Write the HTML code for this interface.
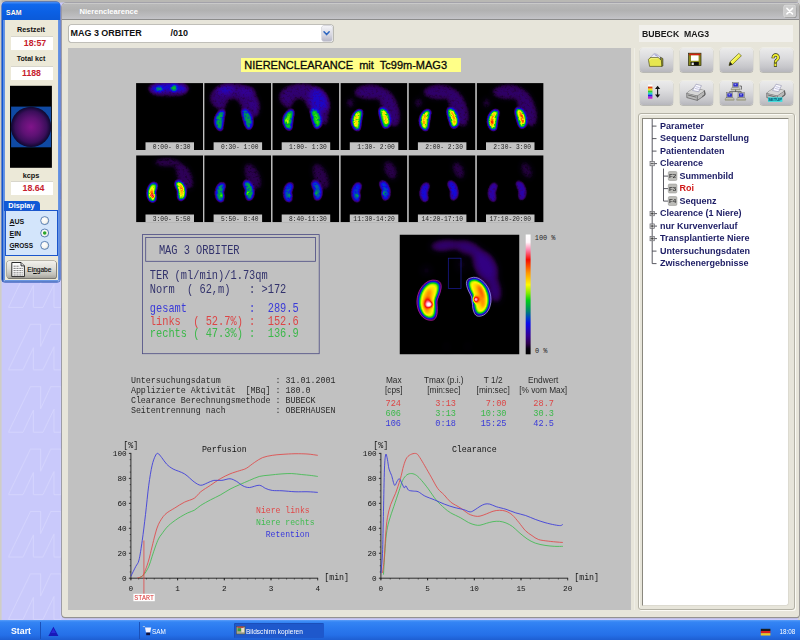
<!DOCTYPE html>
<html><head><meta charset="utf-8"><title>Nierenclearence</title>
<style>

html,body{margin:0;padding:0;}
body{width:800px;height:640px;overflow:hidden;position:relative;background:#c9c9fb;font-family:"Liberation Sans",sans-serif;}
div,span{position:absolute;box-sizing:border-box;white-space:pre;}
.b{font-weight:bold;}
svg{position:absolute;left:0;top:0;overflow:visible;}
.lbl{font-weight:bold;color:#111;text-align:center;left:5px;width:52px;}
.fld{background:#fff;left:11px;width:42px;height:14px;border-top:1px solid #d8d6cc;color:#c6202c;font-weight:bold;text-align:center;}
.tb{background:linear-gradient(#ebebeb 0%,#dcdcde 40%,#c6c6ca 80%,#b6b6bc 100%);border-radius:3px;width:33px;height:24px;box-shadow:0 0.5px 0.6px 0.3px #a8a8a4, 0 0 0.5px 0.6px #f6f5ee;}
.ti{color:#1c1c64;font-weight:bold;font-size:9px;line-height:12.5px;height:12.5px;left:660px;letter-spacing:0px;}
.mono{font-family:"Liberation Mono",monospace;}

</style></head>
<body>

<svg width="800" height="640" viewBox="0 0 800 640">
<defs><pattern id="mm" x="8" y="11.8" width="80" height="62.4" patternUnits="userSpaceOnUse">
<path d="M0.4 46 L22.5 0.4 H32.6 V22.6 L42.8 0.4 H53 V46 H46 V23 L35 46 H25.4 V24 L15 46 Z" fill="none" stroke="#d9d9fe" stroke-width="0.7" stroke-linejoin="round"/>
</pattern></defs>
<rect x="0" y="0" width="800" height="640" fill="#c9c9fb"/>
<rect x="0" y="0" width="62" height="640" fill="url(#mm)"/>
<rect x="0" y="0" width="800" height="2.5" fill="#b9b8b4"/>
<rect x="0" y="0" width="1.6" height="640" fill="#cfcdc6"/>
<rect x="798" y="0" width="2" height="620" fill="#d2d2d2"/>
</svg>


<div id="sam" style="left:2px;top:2px;width:58px;height:280px;background:linear-gradient(#1259d6 0%,#1155cf 90%,#0d3fa4 100%);border-radius:4px 4px 3px 3px;box-shadow:0 0 0 0.5px #0b3fa8;">
 <div style="left:3px;top:18px;width:52.5px;height:259.5px;background:#ece9d8;box-shadow:0 0 0 0.6px #2460d0,0 0 0 1.4px #d4e2fc;"></div>
 <div style="left:0;top:0;width:58px;height:17.6px;border-radius:4px 4px 0 0;background:linear-gradient(#4a90f6 0%,#1068ec 14%,#0b60e4 55%,#0b5ad8 100%);"></div>
 <div class="b" style="left:4px;top:5.8px;color:#fff;font-size:7px;line-height:9px;text-shadow:0.4px 0.4px 0 #0a2a80;">SAM</div>
</div>
<div class="lbl" style="top:25px;font-size:7.3px;line-height:9px;">Restzeit</div>
<div class="fld" style="top:36px;font-size:8.8px;line-height:13px;padding-left:6px;">18:57</div>
<div class="lbl" style="top:55px;font-size:7.1px;line-height:9px;">Total kct</div>
<div class="fld" style="top:66px;font-size:8.7px;line-height:13px;padding-right:1px;">1188</div>
<svg width="800" height="640" viewBox="0 0 800 640">
 <defs><radialGradient id="sph" cx="0.5" cy="0.5" r="0.5"><stop offset="0" stop-color="#80148a"/><stop offset="0.45" stop-color="#5e1274"/><stop offset="0.78" stop-color="#3a0e5a"/><stop offset="0.93" stop-color="#1a0a3c"/><stop offset="1" stop-color="#0e0a30"/></radialGradient></defs>
 <rect x="10" y="85.8" width="41.9" height="82" fill="#000"/>
 <rect x="11.1" y="106.6" width="40" height="40.7" fill="#0f4aa4"/>
 <circle cx="31" cy="126.9" r="20.2" fill="url(#sph)"/>
</svg>
<div class="lbl" style="top:170.5px;font-size:7.35px;line-height:9px;">kcps</div>
<div class="fld" style="top:181px;font-size:8.8px;line-height:13px;padding-left:3px;">18.64</div>
<div style="left:4px;top:201px;width:36px;height:10px;background:#1259d6;border-radius:0 4px 0 0;"></div>
<div class="b" style="left:8.3px;top:201px;color:#fff;font-size:7.4px;line-height:9.5px;">Display</div>
<div style="left:4.6px;top:210px;width:53.2px;height:46.2px;background:#1a56cc;"></div>
<div style="left:5.5px;top:211px;width:51.6px;height:44.4px;background:#d3e5fb;"></div>
<div class="b" style="left:9.5px;top:216.5px;font-size:7px;line-height:9px;color:#111;"><u>A</u>US</div>
<div class="b" style="left:9.5px;top:228.5px;font-size:7px;line-height:9px;color:#111;"><u>E</u>IN</div>
<div class="b" style="left:9.5px;top:241px;font-size:6.5px;line-height:9px;color:#111;"><u>G</u>ROSS</div>
<svg width="800" height="640" viewBox="0 0 800 640">
 <defs><radialGradient id="rad" cx="0.4" cy="0.4" r="0.6"><stop offset="0" stop-color="#fff"/><stop offset="0.7" stop-color="#f4f4f0"/><stop offset="1" stop-color="#d8d8d0"/></radialGradient></defs>
 <circle cx="44.7" cy="220.6" r="4" fill="url(#rad)" stroke="#3c6aa8" stroke-width="0.8"/>
 <circle cx="44.7" cy="233" r="4" fill="url(#rad)" stroke="#3c6aa8" stroke-width="0.8"/>
 <circle cx="44.7" cy="233" r="1.8" fill="#2aa52a"/>
 <circle cx="44.7" cy="245.4" r="4" fill="url(#rad)" stroke="#3c6aa8" stroke-width="0.8"/>
</svg>
<div style="left:6.8px;top:261.3px;width:49.4px;height:16.6px;border-radius:2.5px;background:linear-gradient(#f2f1ec 0%,#deddd6 45%,#c2c0b8 80%,#a6a49c 100%);box-shadow:0 0 0 0.6px #86847c, 0.5px 0.8px 0.5px 0.3px #6e6c66;"></div>
<svg width="800" height="640" viewBox="0 0 800 640">
<path d="M11.8 262.5 H21 L24.4 265.9 V276.6 H11.8 Z" fill="#fbfbfb" stroke="#161616" stroke-width="0.9" stroke-linejoin="round"/>
<path d="M21 262.5 V265.9 H24.4" fill="#d8d8d8" stroke="#161616" stroke-width="0.8"/>
<g stroke="#3a3a3a" stroke-width="0.65"><path d="M13.5 266.2 H19.5 M13.5 268.4 H23 M13.5 270.6 H23 M13.5 272.8 H23 M13.5 275 H23" stroke-dasharray="2.2 0.7"/></g>
</svg>
<div style="left:27.3px;top:265.3px;font-size:6.55px;line-height:9px;color:#0c0c0c;-webkit-text-stroke:0.15px #0c0c0c;">Ei<u>n</u>gabe</div>


<div id="main" style="left:61.5px;top:2.5px;width:737px;height:614px;background:#e7e5da;border-radius:4px 3px 2px 3px;box-shadow:0 0 0 0.6px #86847e, 0 1px 0.5px 0.3px #a2a0a4;">
 <div style="left:0;top:0;width:737px;height:17px;border-radius:4px 3px 0 0;background:linear-gradient(#d2d2d2 0%,#b8b8b8 9%,#b1b1b1 45%,#bcbcbe 80%,#c4c4c8 100%);border-bottom:1px solid #8c8c8c;"></div>
</div>
<div class="b" style="left:79.5px;top:7.3px;font-size:7.57px;line-height:9px;color:#fff;">Nierenclearence</div>
<svg width="800" height="640" viewBox="0 0 800 640">
 <rect x="784.4" y="5.9" width="12.2" height="12" rx="2.2" fill="#8a8a8a"/>
 <rect x="783.6" y="5.1" width="12.2" height="12" rx="2.2" fill="#cdcdcd" stroke="#e6e6e6" stroke-width="0.5"/>
 <path d="M786.9 8.4 L792.5 13.9 M792.5 8.4 L786.9 13.9" stroke="#fff" stroke-width="1.5" stroke-linecap="round"/>
</svg>
<div style="left:68.5px;top:25px;width:264px;height:16.5px;background:#fff;border-radius:2px;box-shadow:0 0 0 0.6px #9a9a98;"></div>
<div class="b" style="left:70.5px;top:28.2px;font-size:8.96px;line-height:11px;color:#111;">MAG 3 ORBITER</div>
<div class="b" style="left:170.6px;top:28.2px;font-size:9px;line-height:11px;color:#111;">/010</div>
<div style="left:321.5px;top:26px;width:10px;height:14.5px;border-radius:1.5px;background:linear-gradient(#f4f4f8,#d6d6e0 60%,#b8b8c8);box-shadow:0 0 0 0.4px #b0b0bc;"></div>
<svg width="800" height="640" viewBox="0 0 800 640"><path d="M324 31.7 L326.6 34.6 L329.2 31.7" fill="none" stroke="#2d66c0" stroke-width="1.5" stroke-linecap="round" stroke-linejoin="round"/></svg>

<div style="left:68px;top:47.5px;width:562.5px;height:562px;background:#c1c1c1;"></div>
<div style="left:241px;top:58px;width:220px;height:14px;background:#ffff88;"></div>
<div style="left:244.3px;top:59.2px;font-size:11px;line-height:12px;color:#0a0a0a;-webkit-text-stroke:0.3px #0a0a0a;">NIERENCLEARANCE  mit  Tc99m-MAG3</div>
<svg width="800" height="640" viewBox="0 0 800 640"><defs>
<filter id="cmf" filterUnits="userSpaceOnUse" x="135" y="82" width="411" height="142" color-interpolation-filters="sRGB"><feTurbulence type="fractalNoise" baseFrequency="0.42" numOctaves="2" seed="7" result="n"/><feColorMatrix in="n" type="matrix" values="0.9 0 0 0 0.55  0.9 0 0 0 0.55  0.9 0 0 0 0.55  0 0 0 0 1" result="ng"/><feComposite in="SourceGraphic" in2="ng" operator="arithmetic" k1="1" k2="0" k3="0" k4="0" result="m"/><feComponentTransfer in="m"><feFuncR type="table" tableValues="0 0.007 0.014 0.068 0.138 0.177 0.187 0.197 0.196 0.167 0.137 0.107 0.077 0.047 0.028 0.009 0 0 0 0 0 0 0 0.085 0.255 0.425 0.58 0.72 0.86 1 1 1 1 1 1 0.994 0.987 0.981 0.974 0.968 0.969 0.978 0.987 0.996 1 1 1 1 1 1 1"/><feFuncG type="table" tableValues="0 0 0 0 0 0 0 0 0.002 0.011 0.02 0.029 0.038 0.047 0.141 0.235 0.329 0.424 0.518 0.584 0.65 0.716 0.783 0.834 0.871 0.907 0.933 0.949 0.965 0.98 0.902 0.824 0.745 0.667 0.588 0.488 0.389 0.289 0.189 0.089 0.098 0.216 0.333 0.451 0.58 0.72 0.86 0.967 0.978 0.989 1"/><feFuncB type="table" tableValues="0 0.017 0.035 0.125 0.241 0.34 0.423 0.506 0.586 0.654 0.722 0.79 0.858 0.925 0.853 0.781 0.682 0.557 0.431 0.353 0.275 0.196 0.118 0.065 0.039 0.013 0 0 0 0 0 0 0 0 0 0 0 0 0 0 0.083 0.25 0.417 0.583 0.715 0.811 0.908 0.982 0.988 0.994 1"/></feComponentTransfer></filter>
<filter id="cmf2" filterUnits="userSpaceOnUse" x="399" y="234" width="121" height="121" color-interpolation-filters="sRGB"><feComponentTransfer><feFuncR type="table" tableValues="0 0.007 0.014 0.068 0.138 0.177 0.187 0.197 0.196 0.167 0.137 0.107 0.077 0.047 0.028 0.009 0 0 0 0 0 0 0 0.085 0.255 0.425 0.58 0.72 0.86 1 1 1 1 1 1 0.994 0.987 0.981 0.974 0.968 0.969 0.978 0.987 0.996 1 1 1 1 1 1 1"/><feFuncG type="table" tableValues="0 0 0 0 0 0 0 0 0.002 0.011 0.02 0.029 0.038 0.047 0.141 0.235 0.329 0.424 0.518 0.584 0.65 0.716 0.783 0.834 0.871 0.907 0.933 0.949 0.965 0.98 0.902 0.824 0.745 0.667 0.588 0.488 0.389 0.289 0.189 0.089 0.098 0.216 0.333 0.451 0.58 0.72 0.86 0.967 0.978 0.989 1"/><feFuncB type="table" tableValues="0 0.017 0.035 0.125 0.241 0.34 0.423 0.506 0.586 0.654 0.722 0.79 0.858 0.925 0.853 0.781 0.682 0.557 0.431 0.353 0.275 0.196 0.118 0.065 0.039 0.013 0 0 0 0 0 0 0 0 0 0 0 0 0 0 0.083 0.25 0.417 0.583 0.715 0.811 0.908 0.982 0.988 0.994 1"/></feComponentTransfer></filter>
<filter id="bk" x="-40%" y="-40%" width="180%" height="180%" color-interpolation-filters="sRGB"><feGaussianBlur stdDeviation="1.25"/></filter>
<filter id="bz" x="-40%" y="-40%" width="180%" height="180%" color-interpolation-filters="sRGB"><feGaussianBlur stdDeviation="2.4"/></filter>
<filter id="bk2" x="-40%" y="-40%" width="180%" height="180%" color-interpolation-filters="sRGB"><feGaussianBlur stdDeviation="1.5"/></filter>
<filter id="bz2" x="-40%" y="-40%" width="180%" height="180%" color-interpolation-filters="sRGB"><feGaussianBlur stdDeviation="3.6"/></filter>
<clipPath id="c67"><rect x="0" y="0" width="67" height="67"/></clipPath>
<clipPath id="c120"><rect x="0" y="0" width="120" height="120"/></clipPath>
<linearGradient id="cbar" x1="0" y1="0" x2="0" y2="1"><stop offset="0.000" stop-color="#ffffff"/><stop offset="0.065" stop-color="#fff6fa"/><stop offset="0.130" stop-color="#ff82aa"/><stop offset="0.210" stop-color="#f60a00"/><stop offset="0.320" stop-color="#ff9600"/><stop offset="0.420" stop-color="#fffa00"/><stop offset="0.490" stop-color="#82ec00"/><stop offset="0.550" stop-color="#00d014"/><stop offset="0.640" stop-color="#00846e"/><stop offset="0.690" stop-color="#0048be"/><stop offset="0.740" stop-color="#0c0cec"/><stop offset="0.845" stop-color="#340091"/><stop offset="0.910" stop-color="#2c004c"/><stop offset="0.955" stop-color="#04000a"/><stop offset="1.000" stop-color="#000000"/></linearGradient>
</defs><g filter="url(#cmf)"><g transform="translate(136.1 83.1)" clip-path="url(#c67)"><rect x="0" y="0" width="67" height="67" fill="#000"/><g filter="url(#bz)"><ellipse cx="32.5" cy="5.5" rx="20" ry="6" fill="#404040"/><ellipse cx="32.5" cy="10.5" rx="18" ry="3" fill="#212121"/></g><g filter="url(#bk)"><ellipse cx="23" cy="6" rx="3.8" ry="2.6" fill="#5e5e5e"/><ellipse cx="37.8" cy="5" rx="3" ry="3.2" fill="#707070"/></g></g><g transform="translate(204.2 83.1)" clip-path="url(#c67)"><rect x="0" y="0" width="67" height="67" fill="#000"/><g filter="url(#bz)"><ellipse cx="29" cy="15" rx="24" ry="15" fill="#202020"/><ellipse cx="21" cy="6.5" rx="9" ry="4.5" fill="#343434"/><ellipse cx="42" cy="8" rx="9" ry="5" fill="#292929"/><ellipse cx="50" cy="24" rx="6" ry="11" fill="#242424"/><ellipse cx="29" cy="30" rx="8.5" ry="14" fill="#000000"/></g><g filter="url(#bk)"><path d="M19.6 37.7 19.2 40.6 18.9 43.2 18.6 45.5 18.0 47.0 17.0 47.7 15.0 47.4 13.4 46.3 12.0 44.5 10.8 42.1 10.2 39.3 10.2 36.3 11.0 33.5 12.4 31.0 14.1 29.0 16.0 27.6 17.9 27.0 19.8 27.3 20.6 28.3 20.8 29.9 20.5 32.1 20.0 34.8Z" fill="#4c4c4c"/><path d="M18.4 37.5 18.1 40.1 17.8 42.5 17.6 44.5 17.1 45.8 16.4 46.5 14.9 46.3 13.7 45.4 12.6 43.8 11.8 41.6 11.3 39.1 11.4 36.5 12.0 34.0 13.2 31.7 14.6 29.9 16.0 28.6 17.4 28.1 18.9 28.3 19.5 29.1 19.5 30.6 19.2 32.5 18.8 34.9Z" fill="#5b5b5b"/><path d="M17.2 37.3 17.0 39.6 16.8 41.7 16.6 43.5 16.3 44.7 15.8 45.3 14.8 45.2 14.0 44.4 13.3 43.0 12.7 41.2 12.5 39.0 12.6 36.7 13.1 34.4 13.9 32.4 15.0 30.8 16.1 29.7 17.1 29.1 18.1 29.3 18.4 30.0 18.3 31.2 18.0 33.0 17.6 35.1Z" fill="#696969"/><path d="M48.1 34.5 48.7 37.4 48.7 40.3 48.3 42.8 47.4 44.7 46.1 46.0 44.2 46.5 42.9 46.0 41.8 44.6 40.8 42.6 39.9 40.0 39.1 37.1 38.3 34.2 37.7 31.5 37.4 29.2 37.6 27.5 38.4 26.4 40.3 25.8 42.1 26.2 43.8 27.4 45.6 29.3 47.0 31.7Z" fill="#4c4c4c"/><path d="M47.0 34.8 47.5 37.5 47.6 40.0 47.4 42.2 46.8 43.9 45.8 44.9 44.4 45.3 43.4 44.8 42.5 43.6 41.7 41.7 41.0 39.3 40.2 36.8 39.5 34.2 38.9 31.8 38.6 29.8 38.6 28.2 39.2 27.3 40.7 26.9 42.0 27.3 43.4 28.4 44.8 30.1 46.1 32.3Z" fill="#595959"/><path d="M45.9 35.2 46.4 37.5 46.6 39.7 46.5 41.6 46.1 43.0 45.5 43.9 44.6 44.1 43.9 43.6 43.3 42.5 42.6 40.8 42.0 38.7 41.3 36.4 40.7 34.2 40.1 32.1 39.8 30.3 39.7 29.0 40.0 28.2 41.0 27.9 41.9 28.4 43.0 29.4 44.1 31.0 45.1 32.9Z" fill="#666666"/></g></g><g transform="translate(272.29999999999995 83.1)" clip-path="url(#c67)"><rect x="0" y="0" width="67" height="67" fill="#000"/><g filter="url(#bz)"><ellipse cx="29" cy="14" rx="23" ry="14" fill="#202020"/><ellipse cx="47.5" cy="19" rx="9" ry="15" fill="#373737" transform="rotate(-18 47.5 19)"/><ellipse cx="52" cy="34" rx="4.5" ry="9" fill="#212121"/><ellipse cx="27" cy="30" rx="8.5" ry="14" fill="#000000"/></g><g filter="url(#bk)"><path d="M20.5 37.2 20.1 40.1 19.8 42.8 19.5 45.0 18.9 46.5 17.8 47.2 15.8 46.9 14.1 45.8 12.6 44.0 11.4 41.6 10.7 38.8 10.7 35.8 11.5 33.0 12.9 30.4 14.8 28.4 16.7 27.1 18.6 26.5 20.7 26.8 21.5 27.8 21.7 29.4 21.4 31.6 20.9 34.3Z" fill="#595959"/><path d="M19.0 37.0 18.7 39.5 18.5 41.8 18.2 43.7 17.8 45.1 17.0 45.7 15.6 45.5 14.4 44.6 13.4 43.1 12.5 41.0 12.1 38.6 12.2 36.0 12.8 33.5 13.9 31.3 15.3 29.6 16.7 28.4 18.1 27.8 19.5 28.1 20.1 28.9 20.1 30.3 19.8 32.2 19.4 34.5Z" fill="#6c6c6c"/><path d="M17.5 36.8 17.3 38.9 17.1 40.9 17.0 42.5 16.8 43.7 16.4 44.2 15.5 44.1 14.9 43.4 14.2 42.1 13.8 40.4 13.5 38.4 13.7 36.2 14.1 34.1 14.9 32.2 15.8 30.7 16.8 29.7 17.6 29.2 18.5 29.3 18.7 29.9 18.6 31.1 18.3 32.7 17.9 34.7Z" fill="#808080"/><ellipse cx="14.0" cy="38" rx="1.0" ry="1.6" fill="#bdbdbd"/><path d="M48.8 33.8 49.3 36.7 49.3 39.5 48.7 41.9 47.8 43.8 46.5 45.0 44.5 45.6 43.2 45.1 42.1 43.7 41.2 41.6 40.4 39.1 39.6 36.2 38.8 33.4 38.3 30.8 38.1 28.5 38.3 26.8 39.2 25.7 41.1 25.2 42.9 25.6 44.7 26.7 46.4 28.6 47.8 31.0Z" fill="#595959"/><path d="M47.4 34.1 47.9 36.6 48.0 39.0 47.7 41.1 47.1 42.7 46.2 43.7 44.8 44.1 43.9 43.6 43.1 42.4 42.3 40.6 41.6 38.3 41.0 35.9 40.3 33.4 39.8 31.1 39.5 29.2 39.6 27.7 40.2 26.8 41.5 26.5 42.8 26.9 44.1 27.9 45.5 29.6 46.6 31.7Z" fill="#6b6b6b"/><path d="M46.1 34.5 46.5 36.6 46.7 38.6 46.6 40.4 46.3 41.7 45.8 42.4 45.0 42.6 44.5 42.1 43.9 41.1 43.4 39.5 42.9 37.6 42.3 35.5 41.8 33.4 41.3 31.5 40.9 29.9 40.9 28.7 41.1 28.0 41.9 27.8 42.7 28.2 43.6 29.2 44.5 30.6 45.4 32.4Z" fill="#7d7d7d"/></g></g><g transform="translate(340.4 83.1)" clip-path="url(#c67)"><rect x="0" y="0" width="67" height="67" fill="#000"/><g filter="url(#bz)"><ellipse cx="30" cy="9" rx="17" ry="8" fill="#1f1f1f"/><ellipse cx="49.5" cy="25" rx="9" ry="20" fill="#202020" transform="rotate(-18 49.5 25)"/><ellipse cx="10" cy="20" rx="5" ry="6" fill="#161616"/></g><g filter="url(#bk)"><path d="M20.9 37.4 20.5 40.3 20.1 43.1 19.7 45.3 19.0 46.8 17.8 47.5 15.7 47.2 14.1 46.1 12.6 44.2 11.5 41.7 11.0 38.8 11.1 35.8 11.9 32.9 13.3 30.4 15.1 28.4 17.1 27.0 19.0 26.5 21.1 26.8 22.0 27.8 22.2 29.5 21.9 31.7 21.4 34.4Z" fill="#666666"/><path d="M19.5 37.2 19.1 39.7 18.8 42.1 18.5 44.0 18.0 45.4 17.1 46.0 15.7 45.8 14.5 44.9 13.5 43.3 12.7 41.1 12.3 38.7 12.5 36.0 13.2 33.5 14.3 31.3 15.7 29.5 17.1 28.3 18.5 27.8 20.0 28.0 20.6 28.8 20.7 30.3 20.4 32.2 19.9 34.6Z" fill="#7c7c7c"/><path d="M18.1 36.9 17.8 39.1 17.5 41.1 17.3 42.8 17.0 44.0 16.5 44.5 15.7 44.4 15.0 43.7 14.4 42.3 13.9 40.6 13.8 38.5 13.9 36.3 14.4 34.1 15.3 32.2 16.2 30.6 17.2 29.6 18.1 29.1 19.0 29.2 19.3 29.9 19.2 31.1 18.9 32.8 18.5 34.8Z" fill="#919191"/><path d="M49.5 33.3 50.0 36.2 50.0 39.0 49.4 41.5 48.4 43.4 47.1 44.6 45.1 45.2 43.7 44.7 42.6 43.3 41.7 41.2 40.9 38.7 40.1 35.9 39.3 33.0 38.8 30.4 38.6 28.1 38.8 26.4 39.7 25.3 41.7 24.8 43.5 25.1 45.3 26.3 47.1 28.2 48.5 30.6Z" fill="#666666"/><path d="M48.2 33.7 48.6 36.2 48.7 38.6 48.4 40.7 47.7 42.3 46.8 43.3 45.4 43.7 44.4 43.2 43.6 42.0 42.8 40.2 42.1 38.0 41.4 35.5 40.8 33.0 40.3 30.7 40.0 28.8 40.1 27.3 40.7 26.4 42.1 26.0 43.4 26.4 44.8 27.5 46.1 29.2 47.3 31.3Z" fill="#7c7c7c"/><path d="M46.8 34.1 47.2 36.2 47.4 38.2 47.3 40.0 47.0 41.3 46.4 42.1 45.6 42.3 45.0 41.8 44.4 40.7 43.9 39.1 43.4 37.2 42.8 35.1 42.3 33.0 41.8 31.1 41.4 29.5 41.4 28.3 41.6 27.6 42.5 27.3 43.3 27.7 44.3 28.7 45.2 30.2 46.1 32.0Z" fill="#919191"/><path d="M16.6 30.5 Q14.2 36.5 15.4 42.5" stroke="#cccccc" stroke-width="1.1" fill="none" stroke-linecap="round"/><path d="M43.4 28.6 Q46.2 33.5 46.6 40" stroke="#cccccc" stroke-width="1.1" fill="none" stroke-linecap="round"/></g></g><g transform="translate(408.5 83.1)" clip-path="url(#c67)"><rect x="0" y="0" width="67" height="67" fill="#000"/><g filter="url(#bz)"><ellipse cx="31" cy="9" rx="17" ry="8" fill="#1e1e1e"/><ellipse cx="50.0" cy="25" rx="9" ry="20" fill="#1f1f1f" transform="rotate(-18 50.0 25)"/><ellipse cx="10" cy="20" rx="5" ry="6" fill="#151515"/></g><g filter="url(#bk)"><path d="M20.9 37.4 20.5 40.3 20.1 43.1 19.7 45.3 19.0 46.8 17.8 47.5 15.7 47.2 14.1 46.1 12.6 44.2 11.5 41.7 11.0 38.8 11.1 35.8 11.9 32.9 13.3 30.4 15.1 28.4 17.1 27.0 19.0 26.5 21.1 26.8 22.0 27.8 22.2 29.5 21.9 31.7 21.4 34.4Z" fill="#696969"/><path d="M19.5 37.2 19.1 39.7 18.8 42.1 18.5 44.0 18.0 45.4 17.1 46.0 15.7 45.8 14.5 44.9 13.5 43.3 12.7 41.1 12.3 38.7 12.5 36.0 13.2 33.5 14.3 31.3 15.7 29.5 17.1 28.3 18.5 27.8 20.0 28.0 20.6 28.8 20.7 30.3 20.4 32.2 19.9 34.6Z" fill="#818181"/><path d="M18.1 36.9 17.8 39.1 17.5 41.1 17.3 42.8 17.0 44.0 16.5 44.5 15.7 44.4 15.0 43.7 14.4 42.3 13.9 40.6 13.8 38.5 13.9 36.3 14.4 34.1 15.3 32.2 16.2 30.6 17.2 29.6 18.1 29.1 19.0 29.2 19.3 29.9 19.2 31.1 18.9 32.8 18.5 34.8Z" fill="#999999"/><path d="M49.5 33.3 50.0 36.2 50.0 39.0 49.4 41.5 48.4 43.4 47.1 44.6 45.1 45.2 43.7 44.7 42.6 43.3 41.7 41.2 40.9 38.7 40.1 35.9 39.3 33.0 38.8 30.4 38.6 28.1 38.8 26.4 39.7 25.3 41.7 24.8 43.5 25.1 45.3 26.3 47.1 28.2 48.5 30.6Z" fill="#696969"/><path d="M48.2 33.7 48.6 36.2 48.7 38.6 48.4 40.7 47.7 42.3 46.8 43.3 45.4 43.7 44.4 43.2 43.6 42.0 42.8 40.2 42.1 38.0 41.4 35.5 40.8 33.0 40.3 30.7 40.0 28.8 40.1 27.3 40.7 26.4 42.1 26.0 43.4 26.4 44.8 27.5 46.1 29.2 47.3 31.3Z" fill="#818181"/><path d="M46.8 34.1 47.2 36.2 47.4 38.2 47.3 40.0 47.0 41.3 46.4 42.1 45.6 42.3 45.0 41.8 44.4 40.7 43.9 39.1 43.4 37.2 42.8 35.1 42.3 33.0 41.8 31.1 41.4 29.5 41.4 28.3 41.6 27.6 42.5 27.3 43.3 27.7 44.3 28.7 45.2 30.2 46.1 32.0Z" fill="#999999"/><path d="M16.6 30.5 Q14.2 36.5 15.4 42.5" stroke="#dbdbdb" stroke-width="1.1" fill="none" stroke-linecap="round"/><path d="M43.4 28.6 Q46.2 33.5 46.6 40" stroke="#dbdbdb" stroke-width="1.1" fill="none" stroke-linecap="round"/></g></g><g transform="translate(476.6 83.1)" clip-path="url(#c67)"><rect x="0" y="0" width="67" height="67" fill="#000"/><g filter="url(#bz)"><ellipse cx="32" cy="9" rx="17" ry="8" fill="#1d1d1d"/><ellipse cx="50.5" cy="25" rx="9" ry="20" fill="#1e1e1e" transform="rotate(-18 50.5 25)"/><ellipse cx="10" cy="20" rx="5" ry="6" fill="#141414"/></g><g filter="url(#bk)"><path d="M20.9 37.4 20.5 40.3 20.1 43.1 19.7 45.3 19.0 46.8 17.8 47.5 15.7 47.2 14.1 46.1 12.6 44.2 11.5 41.7 11.0 38.8 11.1 35.8 11.9 32.9 13.3 30.4 15.1 28.4 17.1 27.0 19.0 26.5 21.1 26.8 22.0 27.8 22.2 29.5 21.9 31.7 21.4 34.4Z" fill="#6b6b6b"/><path d="M19.5 37.2 19.1 39.7 18.8 42.1 18.5 44.0 18.0 45.4 17.1 46.0 15.7 45.8 14.5 44.9 13.5 43.3 12.7 41.1 12.3 38.7 12.5 36.0 13.2 33.5 14.3 31.3 15.7 29.5 17.1 28.3 18.5 27.8 20.0 28.0 20.6 28.8 20.7 30.3 20.4 32.2 19.9 34.6Z" fill="#858585"/><path d="M18.1 36.9 17.8 39.1 17.5 41.1 17.3 42.8 17.0 44.0 16.5 44.5 15.7 44.4 15.0 43.7 14.4 42.3 13.9 40.6 13.8 38.5 13.9 36.3 14.4 34.1 15.3 32.2 16.2 30.6 17.2 29.6 18.1 29.1 19.0 29.2 19.3 29.9 19.2 31.1 18.9 32.8 18.5 34.8Z" fill="#9e9e9e"/><path d="M49.5 33.3 50.0 36.2 50.0 39.0 49.4 41.5 48.4 43.4 47.1 44.6 45.1 45.2 43.7 44.7 42.6 43.3 41.7 41.2 40.9 38.7 40.1 35.9 39.3 33.0 38.8 30.4 38.6 28.1 38.8 26.4 39.7 25.3 41.7 24.8 43.5 25.1 45.3 26.3 47.1 28.2 48.5 30.6Z" fill="#6b6b6b"/><path d="M48.2 33.7 48.6 36.2 48.7 38.6 48.4 40.7 47.7 42.3 46.8 43.3 45.4 43.7 44.4 43.2 43.6 42.0 42.8 40.2 42.1 38.0 41.4 35.5 40.8 33.0 40.3 30.7 40.0 28.8 40.1 27.3 40.7 26.4 42.1 26.0 43.4 26.4 44.8 27.5 46.1 29.2 47.3 31.3Z" fill="#858585"/><path d="M46.8 34.1 47.2 36.2 47.4 38.2 47.3 40.0 47.0 41.3 46.4 42.1 45.6 42.3 45.0 41.8 44.4 40.7 43.9 39.1 43.4 37.2 42.8 35.1 42.3 33.0 41.8 31.1 41.4 29.5 41.4 28.3 41.6 27.6 42.5 27.3 43.3 27.7 44.3 28.7 45.2 30.2 46.1 32.0Z" fill="#9e9e9e"/><path d="M16.6 30.5 Q14.2 36.5 15.4 42.5" stroke="#e6e6e6" stroke-width="1.1" fill="none" stroke-linecap="round"/><path d="M43.4 28.6 Q46.2 33.5 46.6 40" stroke="#e6e6e6" stroke-width="1.1" fill="none" stroke-linecap="round"/><ellipse cx="15.2" cy="39" rx="1.0" ry="1.5" fill="#ffffff"/><ellipse cx="45.6" cy="33" rx="0.9" ry="1.2" fill="#ffffff"/><ellipse cx="46.6" cy="37.5" rx="0.8" ry="1.0" fill="#ffffff"/></g></g><g transform="translate(136.1 155.3)" clip-path="url(#c67)"><rect x="0" y="0" width="67" height="67" fill="#000"/><g filter="url(#bz)"><ellipse cx="48.5" cy="21" rx="8" ry="15" fill="#1a1a1a" transform="rotate(-25 48.5 21)"/><ellipse cx="31" cy="7" rx="14" ry="5.5" fill="#171717"/></g><g filter="url(#bk)"><path d="M19.0 37.1 19.3 38.8 19.8 41.4 19.7 44.1 18.9 45.9 17.5 46.7 15.3 46.4 13.7 45.5 12.5 43.8 11.6 41.6 11.1 39.0 11.1 36.2 11.7 33.5 12.7 31.1 14.0 29.1 15.6 27.8 17.3 27.1 19.5 27.4 20.7 28.4 21.2 30.3 20.7 33.0 19.7 35.5Z" fill="#6b6b6b"/><path d="M18.5 37.5 18.6 39.2 18.8 41.5 18.6 43.7 17.9 45.2 16.9 45.8 15.2 45.7 14.0 44.9 13.1 43.4 12.4 41.5 12.1 39.3 12.1 36.9 12.5 34.5 13.3 32.3 14.3 30.6 15.5 29.4 16.8 28.8 18.5 29.0 19.4 29.9 19.7 31.5 19.5 33.7 18.9 35.9Z" fill="#828282"/><path d="M17.7 37.9 17.6 39.6 17.6 41.5 17.4 43.3 16.9 44.5 16.2 45.0 15.1 44.9 14.3 44.2 13.7 43.1 13.3 41.4 13.0 39.5 13.1 37.5 13.4 35.4 13.9 33.6 14.6 32.1 15.4 31.0 16.3 30.5 17.4 30.7 18.0 31.4 18.3 32.6 18.2 34.4 17.9 36.3Z" fill="#999999"/><path d="M49.6 33.9 49.9 36.7 49.7 39.4 49.1 41.7 48.0 43.5 46.5 44.7 44.4 45.1 42.9 44.5 41.9 42.8 41.5 40.0 41.7 37.3 41.8 35.6 41.0 34.0 39.7 31.6 39.0 28.9 39.2 26.9 40.2 25.8 42.4 25.3 44.2 25.7 45.9 26.9 47.5 28.8 48.7 31.2Z" fill="#6b6b6b"/><path d="M48.6 34.1 49.0 36.5 48.9 38.9 48.4 40.9 47.7 42.4 46.6 43.4 44.9 43.7 43.8 43.2 43.0 41.7 42.5 39.5 42.4 37.2 42.3 35.4 41.7 33.8 40.9 31.7 40.4 29.4 40.6 27.8 41.4 26.8 43.0 26.5 44.4 26.9 45.7 28.0 46.9 29.6 47.9 31.7Z" fill="#878787"/><path d="M47.7 34.3 48.0 36.4 48.0 38.4 47.8 40.1 47.3 41.3 46.6 42.1 45.5 42.3 44.7 41.8 44.1 40.7 43.7 38.9 43.4 36.9 43.1 35.3 42.7 33.6 42.2 31.8 41.8 29.9 41.9 28.6 42.4 27.9 43.5 27.6 44.5 28.0 45.4 29.0 46.3 30.5 47.1 32.3Z" fill="#a3a3a3"/><ellipse cx="15.6" cy="38.5" rx="1.8" ry="3.4" fill="#cccccc" transform="rotate(8 15.6 38.5)"/><ellipse cx="16.8" cy="40.4" rx="2.0" ry="1.7" fill="#e6e6e6"/><ellipse cx="17.4" cy="40.6" rx="1.5" ry="1.2" fill="#ffffff" transform="rotate(-20 17.4 40.6)"/><ellipse cx="45.6" cy="33" rx="1.0" ry="3.2" fill="#cccccc" transform="rotate(-16 45.6 33)"/></g></g><g transform="translate(204.2 155.3)" clip-path="url(#c67)"><rect x="0" y="0" width="67" height="67" fill="#000"/><g filter="url(#bz)"><ellipse cx="48.5" cy="21" rx="8" ry="15" fill="#181818" transform="rotate(-25 48.5 21)"/></g><g filter="url(#bk)"><path d="M19.0 37.1 19.3 38.8 19.8 41.4 19.7 44.1 18.9 45.9 17.5 46.7 15.3 46.4 13.7 45.5 12.5 43.8 11.6 41.6 11.1 39.0 11.1 36.2 11.7 33.5 12.7 31.1 14.0 29.1 15.6 27.8 17.3 27.1 19.5 27.4 20.7 28.4 21.2 30.3 20.7 33.0 19.7 35.5Z" fill="#4a4a4a"/><path d="M18.5 37.5 18.6 39.2 18.8 41.5 18.6 43.7 17.9 45.2 16.9 45.8 15.2 45.7 14.0 44.9 13.1 43.4 12.4 41.5 12.1 39.3 12.1 36.9 12.5 34.5 13.3 32.3 14.3 30.6 15.5 29.4 16.8 28.8 18.5 29.0 19.4 29.9 19.7 31.5 19.5 33.7 18.9 35.9Z" fill="#585858"/><path d="M17.7 37.9 17.6 39.6 17.6 41.5 17.4 43.3 16.9 44.5 16.2 45.0 15.1 44.9 14.3 44.2 13.7 43.1 13.3 41.4 13.0 39.5 13.1 37.5 13.4 35.4 13.9 33.6 14.6 32.1 15.4 31.0 16.3 30.5 17.4 30.7 18.0 31.4 18.3 32.6 18.2 34.4 17.9 36.3Z" fill="#666666"/><path d="M49.6 33.9 49.9 36.7 49.7 39.4 49.1 41.7 48.0 43.5 46.5 44.7 44.4 45.1 42.9 44.5 41.9 42.8 41.5 40.0 41.7 37.3 41.8 35.6 41.0 34.0 39.7 31.6 39.0 28.9 39.2 26.9 40.2 25.8 42.4 25.3 44.2 25.7 45.9 26.9 47.5 28.8 48.7 31.2Z" fill="#4c4c4c"/><path d="M48.6 34.1 49.0 36.5 48.9 38.9 48.4 40.9 47.7 42.4 46.6 43.4 44.9 43.7 43.8 43.2 43.0 41.7 42.5 39.5 42.4 37.2 42.3 35.4 41.7 33.8 40.9 31.7 40.4 29.4 40.6 27.8 41.4 26.8 43.0 26.5 44.4 26.9 45.7 28.0 46.9 29.6 47.9 31.7Z" fill="#5b5b5b"/><path d="M47.7 34.3 48.0 36.4 48.0 38.4 47.8 40.1 47.3 41.3 46.6 42.1 45.5 42.3 44.7 41.8 44.1 40.7 43.7 38.9 43.4 36.9 43.1 35.3 42.7 33.6 42.2 31.8 41.8 29.9 41.9 28.6 42.4 27.9 43.5 27.6 44.5 28.0 45.4 29.0 46.3 30.5 47.1 32.3Z" fill="#696969"/><ellipse cx="17.6" cy="40" rx="1.5" ry="1.5" fill="#999999"/><ellipse cx="42.8" cy="38" rx="1.6" ry="1.7" fill="#a3a3a3"/></g></g><g transform="translate(272.29999999999995 155.3)" clip-path="url(#c67)"><rect x="0" y="0" width="67" height="67" fill="#000"/><g filter="url(#bz)"><ellipse cx="48.5" cy="21" rx="8" ry="15" fill="#171717" transform="rotate(-25 48.5 21)"/></g><g filter="url(#bk)"><path d="M19.0 37.1 19.3 38.8 19.8 41.4 19.7 44.1 18.9 45.9 17.5 46.7 15.3 46.4 13.7 45.5 12.5 43.8 11.6 41.6 11.1 39.0 11.1 36.2 11.7 33.5 12.7 31.1 14.0 29.1 15.6 27.8 17.3 27.1 19.5 27.4 20.7 28.4 21.2 30.3 20.7 33.0 19.7 35.5Z" fill="#404040"/><path d="M18.5 37.5 18.6 39.2 18.8 41.5 18.6 43.7 17.9 45.2 16.9 45.8 15.2 45.7 14.0 44.9 13.1 43.4 12.4 41.5 12.1 39.3 12.1 36.9 12.5 34.5 13.3 32.3 14.3 30.6 15.5 29.4 16.8 28.8 18.5 29.0 19.4 29.9 19.7 31.5 19.5 33.7 18.9 35.9Z" fill="#4a4a4a"/><path d="M17.7 37.9 17.6 39.6 17.6 41.5 17.4 43.3 16.9 44.5 16.2 45.0 15.1 44.9 14.3 44.2 13.7 43.1 13.3 41.4 13.0 39.5 13.1 37.5 13.4 35.4 13.9 33.6 14.6 32.1 15.4 31.0 16.3 30.5 17.4 30.7 18.0 31.4 18.3 32.6 18.2 34.4 17.9 36.3Z" fill="#545454"/><path d="M49.6 33.9 49.9 36.7 49.7 39.4 49.1 41.7 48.0 43.5 46.5 44.7 44.4 45.1 42.9 44.5 41.9 42.8 41.5 40.0 41.7 37.3 41.8 35.6 41.0 34.0 39.7 31.6 39.0 28.9 39.2 26.9 40.2 25.8 42.4 25.3 44.2 25.7 45.9 26.9 47.5 28.8 48.7 31.2Z" fill="#404040"/><path d="M48.6 34.1 49.0 36.5 48.9 38.9 48.4 40.9 47.7 42.4 46.6 43.4 44.9 43.7 43.8 43.2 43.0 41.7 42.5 39.5 42.4 37.2 42.3 35.4 41.7 33.8 40.9 31.7 40.4 29.4 40.6 27.8 41.4 26.8 43.0 26.5 44.4 26.9 45.7 28.0 46.9 29.6 47.9 31.7Z" fill="#4b4b4b"/><path d="M47.7 34.3 48.0 36.4 48.0 38.4 47.8 40.1 47.3 41.3 46.6 42.1 45.5 42.3 44.7 41.8 44.1 40.7 43.7 38.9 43.4 36.9 43.1 35.3 42.7 33.6 42.2 31.8 41.8 29.9 41.9 28.6 42.4 27.9 43.5 27.6 44.5 28.0 45.4 29.0 46.3 30.5 47.1 32.3Z" fill="#575757"/><ellipse cx="17.8" cy="40" rx="1.3" ry="1.3" fill="#787878"/><ellipse cx="43" cy="38" rx="1.3" ry="1.4" fill="#8f8f8f"/></g></g><g transform="translate(340.4 155.3)" clip-path="url(#c67)"><rect x="0" y="0" width="67" height="67" fill="#000"/><g filter="url(#bz)"><ellipse cx="50" cy="15" rx="7" ry="11" fill="#171717" transform="rotate(-25 50 15)"/></g><g filter="url(#bk)"><path d="M19.0 37.1 19.3 38.8 19.8 41.4 19.7 44.1 18.9 45.9 17.5 46.7 15.3 46.4 13.7 45.5 12.5 43.8 11.6 41.6 11.1 39.0 11.1 36.2 11.7 33.5 12.7 31.1 14.0 29.1 15.6 27.8 17.3 27.1 19.5 27.4 20.7 28.4 21.2 30.3 20.7 33.0 19.7 35.5Z" fill="#3d3d3d"/><path d="M18.5 37.5 18.6 39.2 18.8 41.5 18.6 43.7 17.9 45.2 16.9 45.8 15.2 45.7 14.0 44.9 13.1 43.4 12.4 41.5 12.1 39.3 12.1 36.9 12.5 34.5 13.3 32.3 14.3 30.6 15.5 29.4 16.8 28.8 18.5 29.0 19.4 29.9 19.7 31.5 19.5 33.7 18.9 35.9Z" fill="#464646"/><path d="M17.7 37.9 17.6 39.6 17.6 41.5 17.4 43.3 16.9 44.5 16.2 45.0 15.1 44.9 14.3 44.2 13.7 43.1 13.3 41.4 13.0 39.5 13.1 37.5 13.4 35.4 13.9 33.6 14.6 32.1 15.4 31.0 16.3 30.5 17.4 30.7 18.0 31.4 18.3 32.6 18.2 34.4 17.9 36.3Z" fill="#4f4f4f"/><path d="M49.6 33.9 49.9 36.7 49.7 39.4 49.1 41.7 48.0 43.5 46.5 44.7 44.4 45.1 42.9 44.5 41.9 42.8 41.5 40.0 41.7 37.3 41.8 35.6 41.0 34.0 39.7 31.6 39.0 28.9 39.2 26.9 40.2 25.8 42.4 25.3 44.2 25.7 45.9 26.9 47.5 28.8 48.7 31.2Z" fill="#3d3d3d"/><path d="M48.6 34.1 49.0 36.5 48.9 38.9 48.4 40.9 47.7 42.4 46.6 43.4 44.9 43.7 43.8 43.2 43.0 41.7 42.5 39.5 42.4 37.2 42.3 35.4 41.7 33.8 40.9 31.7 40.4 29.4 40.6 27.8 41.4 26.8 43.0 26.5 44.4 26.9 45.7 28.0 46.9 29.6 47.9 31.7Z" fill="#464646"/><path d="M47.7 34.3 48.0 36.4 48.0 38.4 47.8 40.1 47.3 41.3 46.6 42.1 45.5 42.3 44.7 41.8 44.1 40.7 43.7 38.9 43.4 36.9 43.1 35.3 42.7 33.6 42.2 31.8 41.8 29.9 41.9 28.6 42.4 27.9 43.5 27.6 44.5 28.0 45.4 29.0 46.3 30.5 47.1 32.3Z" fill="#4f4f4f"/><ellipse cx="17.4" cy="40" rx="1.8" ry="1.5" fill="#757575"/><ellipse cx="42.8" cy="38" rx="1.4" ry="2.0" fill="#7a7a7a"/></g></g><g transform="translate(408.5 155.3)" clip-path="url(#c67)"><rect x="0" y="0" width="67" height="67" fill="#000"/><g filter="url(#bz)"><ellipse cx="50" cy="15" rx="6.5" ry="10" fill="#161616" transform="rotate(-25 50 15)"/></g><g filter="url(#bk)"><path d="M19.0 37.1 19.3 38.8 19.8 41.4 19.7 44.1 18.9 45.9 17.5 46.7 15.3 46.4 13.7 45.5 12.5 43.8 11.6 41.6 11.1 39.0 11.1 36.2 11.7 33.5 12.7 31.1 14.0 29.1 15.6 27.8 17.3 27.1 19.5 27.4 20.7 28.4 21.2 30.3 20.7 33.0 19.7 35.5Z" fill="#323232"/><path d="M18.5 37.5 18.6 39.2 18.8 41.5 18.6 43.7 17.9 45.2 16.9 45.8 15.2 45.7 14.0 44.9 13.1 43.4 12.4 41.5 12.1 39.3 12.1 36.9 12.5 34.5 13.3 32.3 14.3 30.6 15.5 29.4 16.8 28.8 18.5 29.0 19.4 29.9 19.7 31.5 19.5 33.7 18.9 35.9Z" fill="#373737"/><path d="M17.7 37.9 17.6 39.6 17.6 41.5 17.4 43.3 16.9 44.5 16.2 45.0 15.1 44.9 14.3 44.2 13.7 43.1 13.3 41.4 13.0 39.5 13.1 37.5 13.4 35.4 13.9 33.6 14.6 32.1 15.4 31.0 16.3 30.5 17.4 30.7 18.0 31.4 18.3 32.6 18.2 34.4 17.9 36.3Z" fill="#3c3c3c"/><path d="M49.6 33.9 49.9 36.7 49.7 39.4 49.1 41.7 48.0 43.5 46.5 44.7 44.4 45.1 42.9 44.5 41.9 42.8 41.5 40.0 41.7 37.3 41.8 35.6 41.0 34.0 39.7 31.6 39.0 28.9 39.2 26.9 40.2 25.8 42.4 25.3 44.2 25.7 45.9 26.9 47.5 28.8 48.7 31.2Z" fill="#333333"/><path d="M48.6 34.1 49.0 36.5 48.9 38.9 48.4 40.9 47.7 42.4 46.6 43.4 44.9 43.7 43.8 43.2 43.0 41.7 42.5 39.5 42.4 37.2 42.3 35.4 41.7 33.8 40.9 31.7 40.4 29.4 40.6 27.8 41.4 26.8 43.0 26.5 44.4 26.9 45.7 28.0 46.9 29.6 47.9 31.7Z" fill="#383838"/><path d="M47.7 34.3 48.0 36.4 48.0 38.4 47.8 40.1 47.3 41.3 46.6 42.1 45.5 42.3 44.7 41.8 44.1 40.7 43.7 38.9 43.4 36.9 43.1 35.3 42.7 33.6 42.2 31.8 41.8 29.9 41.9 28.6 42.4 27.9 43.5 27.6 44.5 28.0 45.4 29.0 46.3 30.5 47.1 32.3Z" fill="#3d3d3d"/><ellipse cx="43.5" cy="35" rx="1" ry="1" fill="#545454"/></g></g><g transform="translate(476.6 155.3)" clip-path="url(#c67)"><rect x="0" y="0" width="67" height="67" fill="#000"/><g filter="url(#bz)"><ellipse cx="50" cy="15" rx="6.5" ry="10" fill="#141414" transform="rotate(-25 50 15)"/></g><g filter="url(#bk)"><path d="M19.0 37.1 19.3 38.8 19.8 41.4 19.7 44.1 18.9 45.9 17.5 46.7 15.3 46.4 13.7 45.5 12.5 43.8 11.6 41.6 11.1 39.0 11.1 36.2 11.7 33.5 12.7 31.1 14.0 29.1 15.6 27.8 17.3 27.1 19.5 27.4 20.7 28.4 21.2 30.3 20.7 33.0 19.7 35.5Z" fill="#282828"/><path d="M18.5 37.5 18.6 39.2 18.8 41.5 18.6 43.7 17.9 45.2 16.9 45.8 15.2 45.7 14.0 44.9 13.1 43.4 12.4 41.5 12.1 39.3 12.1 36.9 12.5 34.5 13.3 32.3 14.3 30.6 15.5 29.4 16.8 28.8 18.5 29.0 19.4 29.9 19.7 31.5 19.5 33.7 18.9 35.9Z" fill="#2b2b2b"/><path d="M17.7 37.9 17.6 39.6 17.6 41.5 17.4 43.3 16.9 44.5 16.2 45.0 15.1 44.9 14.3 44.2 13.7 43.1 13.3 41.4 13.0 39.5 13.1 37.5 13.4 35.4 13.9 33.6 14.6 32.1 15.4 31.0 16.3 30.5 17.4 30.7 18.0 31.4 18.3 32.6 18.2 34.4 17.9 36.3Z" fill="#2e2e2e"/><path d="M49.6 33.9 49.9 36.7 49.7 39.4 49.1 41.7 48.0 43.5 46.5 44.7 44.4 45.1 42.9 44.5 41.9 42.8 41.5 40.0 41.7 37.3 41.8 35.6 41.0 34.0 39.7 31.6 39.0 28.9 39.2 26.9 40.2 25.8 42.4 25.3 44.2 25.7 45.9 26.9 47.5 28.8 48.7 31.2Z" fill="#292929"/><path d="M48.6 34.1 49.0 36.5 48.9 38.9 48.4 40.9 47.7 42.4 46.6 43.4 44.9 43.7 43.8 43.2 43.0 41.7 42.5 39.5 42.4 37.2 42.3 35.4 41.7 33.8 40.9 31.7 40.4 29.4 40.6 27.8 41.4 26.8 43.0 26.5 44.4 26.9 45.7 28.0 46.9 29.6 47.9 31.7Z" fill="#2c2c2c"/><path d="M47.7 34.3 48.0 36.4 48.0 38.4 47.8 40.1 47.3 41.3 46.6 42.1 45.5 42.3 44.7 41.8 44.1 40.7 43.7 38.9 43.4 36.9 43.1 35.3 42.7 33.6 42.2 31.8 41.8 29.9 41.9 28.6 42.4 27.9 43.5 27.6 44.5 28.0 45.4 29.0 46.3 30.5 47.1 32.3Z" fill="#2f2f2f"/></g></g></g><g filter="url(#cmf2)"><g transform="translate(399.5 234.5)" clip-path="url(#c120)"><rect x="0" y="0" width="120" height="120" fill="#000"/><g filter="url(#bz2)"><ellipse cx="45" cy="11" rx="15" ry="6" fill="#212121" transform="rotate(-5 45 11)"/><ellipse cx="68" cy="13" rx="14" ry="7" fill="#212121" transform="rotate(15 68 13)"/><ellipse cx="86" cy="32" rx="11" ry="18" fill="#242424" transform="rotate(-28 86 32)"/><ellipse cx="95" cy="55" rx="7" ry="14" fill="#212121" transform="rotate(-10 95 55)"/><ellipse cx="27" cy="36" rx="6" ry="5" fill="#121212"/><ellipse cx="62" cy="30" rx="6" ry="8" fill="#0f0f0f"/><ellipse cx="47" cy="112" rx="2" ry="5" fill="#0f0f0f"/><ellipse cx="68" cy="112" rx="2" ry="5" fill="#0f0f0f"/></g><g filter="url(#bk2)"><path d="M36.3 66.3 36.2 68.2 36.4 70.5 36.6 73.3 36.6 76.2 36.4 78.9 35.7 81.1 34.8 82.8 33.5 83.8 31.9 84.3 29.6 84.2 27.2 83.6 25.4 82.6 23.7 81.2 22.3 79.4 21.1 77.3 20.0 74.9 19.3 72.2 18.9 69.4 18.8 66.5 19.1 63.5 19.8 60.7 20.7 57.9 22.0 55.4 23.5 53.0 25.2 51.0 27.1 49.4 29.0 48.1 31.0 47.3 33.0 46.9 35.5 47.1 37.7 47.7 39.1 48.7 40.0 50.1 40.3 52.0 40.2 54.3 39.7 57.0 38.8 59.7 37.7 62.2 36.8 64.4Z" fill="#808080"/><path d="M34.8 66.4 34.6 68.3 34.6 70.4 34.5 72.7 34.3 75.1 34.0 77.2 33.5 79.0 32.7 80.4 31.8 81.3 30.6 81.8 28.9 81.7 27.2 81.2 25.9 80.4 24.7 79.3 23.7 77.8 22.9 76.0 22.2 74.0 21.7 71.7 21.4 69.3 21.4 66.9 21.7 64.4 22.2 61.9 22.9 59.6 23.9 57.4 25.0 55.4 26.2 53.7 27.6 52.2 29.0 51.1 30.4 50.4 31.9 50.0 33.7 50.1 35.3 50.6 36.3 51.3 36.9 52.5 37.2 54.0 37.2 55.9 36.9 58.1 36.4 60.4 35.7 62.6 35.2 64.6Z" fill="#999999"/><path d="M31.1 67.1 30.9 68.8 30.7 70.5 30.5 72.2 30.3 73.9 30.1 75.5 29.8 76.7 29.4 77.8 28.9 78.5 28.4 78.8 27.6 78.9 26.8 78.6 26.2 78.0 25.6 77.2 25.1 76.1 24.7 74.8 24.4 73.3 24.2 71.6 24.1 69.8 24.2 67.9 24.4 66.0 24.7 64.2 25.1 62.4 25.6 60.7 26.3 59.1 27.0 57.8 27.7 56.6 28.4 55.7 29.1 55.1 29.9 54.8 30.7 54.7 31.5 55.0 31.9 55.6 32.2 56.4 32.3 57.4 32.2 58.8 32.1 60.3 31.8 62.0 31.6 63.7 31.3 65.4Z" fill="#b0b0b0"/><ellipse cx="27.8" cy="68.5" rx="3.4" ry="5.0" fill="#d1d1d1" transform="rotate(10 27.8 68.5)"/><ellipse cx="29.6" cy="70" rx="3.2" ry="2.8" fill="#f2f2f2"/><ellipse cx="30.3" cy="70.3" rx="2.8" ry="2.0" fill="#ffffff" transform="rotate(-20 30.3 70.3)"/><path d="M89.3 59.0 89.8 61.8 90.1 64.6 90.0 67.4 89.6 70.1 88.9 72.5 88.0 74.7 86.8 76.6 85.5 78.1 83.9 79.2 81.7 80.0 79.6 80.3 78.1 80.0 76.8 79.1 75.8 77.5 75.0 75.4 74.4 72.9 74.1 70.1 74.0 67.4 73.9 65.1 73.6 63.2 72.9 61.3 71.8 59.3 70.6 56.9 69.5 54.3 68.7 51.8 68.3 49.6 68.4 47.8 69.1 46.3 70.2 45.3 72.2 44.5 74.5 44.1 76.4 44.3 78.3 44.9 80.3 46.0 82.2 47.4 84.0 49.2 85.7 51.3 87.2 53.6 88.4 56.2Z" fill="#808080"/><path d="M87.0 59.7 87.5 62.1 87.8 64.6 87.8 66.9 87.6 69.2 87.2 71.2 86.6 73.1 85.8 74.6 84.8 75.8 83.7 76.7 82.2 77.4 80.6 77.6 79.5 77.2 78.6 76.4 77.7 75.1 77.1 73.4 76.5 71.4 76.1 69.1 75.8 66.8 75.5 64.8 75.1 62.9 74.5 61.1 73.7 59.2 72.9 57.1 72.1 54.9 71.6 52.8 71.3 51.0 71.4 49.4 71.8 48.3 72.6 47.4 74.1 46.8 75.7 46.6 77.1 46.8 78.6 47.4 80.0 48.4 81.5 49.6 82.9 51.2 84.2 53.1 85.3 55.1 86.3 57.4Z" fill="#999999"/><path d="M84.6 60.6 85.0 62.4 85.3 64.2 85.5 65.9 85.5 67.6 85.5 69.0 85.3 70.3 85.0 71.4 84.7 72.3 84.2 72.8 83.6 73.1 83.0 73.2 82.5 72.8 82.0 72.2 81.6 71.2 81.2 70.0 80.8 68.6 80.4 67.0 80.0 65.3 79.6 63.6 79.2 62.0 78.8 60.4 78.3 58.8 77.8 57.1 77.4 55.5 77.0 54.1 76.8 52.8 76.7 51.8 76.8 51.0 77.0 50.5 77.6 50.2 78.3 50.1 79.0 50.4 79.7 50.9 80.4 51.7 81.2 52.8 82.0 54.0 82.8 55.5 83.5 57.1 84.1 58.8Z" fill="#b0b0b0"/><ellipse cx="82.3" cy="57" rx="1.4" ry="7.0" fill="#bfbfbf" transform="rotate(-20 82.3 57)"/><ellipse cx="76.2" cy="65.0" rx="3.2" ry="3.0" fill="#d6d6d6"/><ellipse cx="75.7" cy="65.2" rx="2.3" ry="2.1" fill="#ffffff"/><ellipse cx="75.6" cy="65.3" rx="1.6" ry="1.5" fill="#ffffff"/></g></g></g><g transform="translate(136.1 83.1)"><rect x="9.4" y="59.2" width="48.5" height="7.8" fill="#c4c4c4"/><text x="33.7" y="57.22" transform="scale(1 1.15)" font-family="Liberation Mono" font-size="6.3" fill="#1c1c1c" text-anchor="middle" xml:space="preserve"> 0:00- 0:30</text></g><g transform="translate(204.2 83.1)"><rect x="9.4" y="59.2" width="48.5" height="7.8" fill="#c4c4c4"/><text x="33.7" y="57.22" transform="scale(1 1.15)" font-family="Liberation Mono" font-size="6.3" fill="#1c1c1c" text-anchor="middle" xml:space="preserve"> 0:30- 1:00</text></g><g transform="translate(272.29999999999995 83.1)"><rect x="9.4" y="59.2" width="48.5" height="7.8" fill="#c4c4c4"/><text x="33.7" y="57.22" transform="scale(1 1.15)" font-family="Liberation Mono" font-size="6.3" fill="#1c1c1c" text-anchor="middle" xml:space="preserve"> 1:00- 1:30</text></g><g transform="translate(340.4 83.1)"><rect x="9.4" y="59.2" width="48.5" height="7.8" fill="#c4c4c4"/><text x="33.7" y="57.22" transform="scale(1 1.15)" font-family="Liberation Mono" font-size="6.3" fill="#1c1c1c" text-anchor="middle" xml:space="preserve"> 1:30- 2:00</text></g><g transform="translate(408.5 83.1)"><rect x="9.4" y="59.2" width="48.5" height="7.8" fill="#c4c4c4"/><text x="33.7" y="57.22" transform="scale(1 1.15)" font-family="Liberation Mono" font-size="6.3" fill="#1c1c1c" text-anchor="middle" xml:space="preserve"> 2:00- 2:30</text></g><g transform="translate(476.6 83.1)"><rect x="9.4" y="59.2" width="48.5" height="7.8" fill="#c4c4c4"/><text x="33.7" y="57.22" transform="scale(1 1.15)" font-family="Liberation Mono" font-size="6.3" fill="#1c1c1c" text-anchor="middle" xml:space="preserve"> 2:30- 3:00</text></g><g transform="translate(136.1 155.3)"><rect x="9.4" y="59.2" width="48.5" height="7.8" fill="#c4c4c4"/><text x="33.7" y="57.22" transform="scale(1 1.15)" font-family="Liberation Mono" font-size="6.3" fill="#1c1c1c" text-anchor="middle" xml:space="preserve"> 3:00- 5:50</text></g><g transform="translate(204.2 155.3)"><rect x="9.4" y="59.2" width="48.5" height="7.8" fill="#c4c4c4"/><text x="33.7" y="57.22" transform="scale(1 1.15)" font-family="Liberation Mono" font-size="6.3" fill="#1c1c1c" text-anchor="middle" xml:space="preserve"> 5:50- 8:40</text></g><g transform="translate(272.29999999999995 155.3)"><rect x="9.4" y="59.2" width="48.5" height="7.8" fill="#c4c4c4"/><text x="33.7" y="57.22" transform="scale(1 1.15)" font-family="Liberation Mono" font-size="6.3" fill="#1c1c1c" text-anchor="middle" xml:space="preserve"> 8:40-11:30</text></g><g transform="translate(340.4 155.3)"><rect x="9.4" y="59.2" width="48.5" height="7.8" fill="#c4c4c4"/><text x="33.7" y="57.22" transform="scale(1 1.15)" font-family="Liberation Mono" font-size="6.3" fill="#1c1c1c" text-anchor="middle" xml:space="preserve">11:30-14:20</text></g><g transform="translate(408.5 155.3)"><rect x="9.4" y="59.2" width="48.5" height="7.8" fill="#c4c4c4"/><text x="33.7" y="57.22" transform="scale(1 1.15)" font-family="Liberation Mono" font-size="6.3" fill="#1c1c1c" text-anchor="middle" xml:space="preserve">14:20-17:10</text></g><g transform="translate(476.6 155.3)"><rect x="9.4" y="59.2" width="48.5" height="7.8" fill="#c4c4c4"/><text x="33.7" y="57.22" transform="scale(1 1.15)" font-family="Liberation Mono" font-size="6.3" fill="#1c1c1c" text-anchor="middle" xml:space="preserve">17:10-20:00</text></g><g transform="translate(399.5 234.5)"><path d="M37.5 66.5 37.4 68.7 37.6 71.2 37.7 74.1 37.7 77.2 37.4 80.0 36.7 82.4 35.6 84.2 34.2 85.3 32.4 85.8 29.7 85.7 27.0 85.0 25.0 83.9 23.1 82.4 21.5 80.5 20.1 78.2 18.9 75.5 18.1 72.7 17.6 69.6 17.5 66.5 17.8 63.3 18.5 60.2 19.5 57.3 20.9 54.5 22.6 52.1 24.5 49.9 26.6 48.2 28.8 46.8 31.0 46.0 33.3 45.6 36.1 45.8 38.6 46.4 40.2 47.5 41.2 49.0 41.7 51.0 41.6 53.5 41.0 56.3 40.1 59.2 39.0 62.0 38.1 64.3Z" fill="none" stroke="#d420b4" stroke-width="0.7" opacity="0.9"/><path d="M90.6 58.6 91.2 61.6 91.4 64.7 91.3 67.7 90.8 70.6 90.0 73.3 88.9 75.6 87.5 77.7 86.0 79.3 84.1 80.6 81.7 81.5 79.3 81.8 77.5 81.5 76.1 80.5 75.0 78.9 74.1 76.7 73.4 74.0 73.1 71.0 72.9 68.2 72.7 65.7 72.4 63.5 71.6 61.4 70.5 59.2 69.2 56.6 68.0 53.9 67.2 51.2 66.9 48.8 67.1 46.9 67.8 45.3 69.2 44.2 71.4 43.3 74.0 42.8 76.2 43.0 78.4 43.6 80.6 44.7 82.7 46.2 84.8 48.1 86.6 50.4 88.3 52.9 89.6 55.7Z" fill="none" stroke="#a8b8ff" stroke-width="0.7" opacity="0.95"/><rect x="48.8" y="23.7" width="12.7" height="30.4" fill="none" stroke="#1c1c9c" stroke-width="0.7"/></g><rect x="525.7" y="234.5" width="4.9" height="119.8" fill="url(#cbar)"/><g font-family="Liberation Mono" font-size="6.9" fill="#242424"><text x="534.8" y="240.3" xml:space="preserve">100 %</text><text x="535" y="353" xml:space="preserve">0 %</text></g></svg><svg width="800" height="640" viewBox="0 0 800 640"><rect x="142.4" y="234.6" width="176.8" height="119.1" fill="none" stroke="#4a4a82" stroke-width="0.8"/><rect x="145.7" y="237.4" width="169.9" height="23.9" fill="none" stroke="#4a4a82" stroke-width="0.8"/><text x="158.9" y="211.50" transform="scale(1 1.2)" font-family="Liberation Mono" font-size="10.35" fill="#33336c" xml:space="preserve">MAG 3 ORBITER</text><text x="149.8" y="232.50" transform="scale(1 1.2)" font-family="Liberation Mono" font-size="10.35" fill="#33336c" xml:space="preserve">TER (ml/min)/1.73qm</text><text x="149.8" y="244.00" transform="scale(1 1.2)" font-family="Liberation Mono" font-size="10.35" fill="#33336c" xml:space="preserve">Norm  ( 62,m)   : >172</text><text x="149.8" y="260.00" transform="scale(1 1.2)" font-family="Liberation Mono" font-size="10.35" fill="#3a3ad8" xml:space="preserve">gesamt          :  289.5</text><text x="149.8" y="270.58" transform="scale(1 1.2)" font-family="Liberation Mono" font-size="10.35" fill="#dc4646" xml:space="preserve">links  ( 52.7%) :  152.6</text><text x="149.8" y="280.67" transform="scale(1 1.2)" font-family="Liberation Mono" font-size="10.35" fill="#3cb84a" xml:space="preserve">rechts ( 47.3%) :  136.9</text></svg><svg width="800" height="640" viewBox="0 0 800 640"><g font-family="Liberation Mono" font-size="8.32" fill="#2a2a2a"><text x="130.9" y="383.0" xml:space="preserve">Untersuchungsdatum           : 31.01.2001</text><text x="130.9" y="392.8" xml:space="preserve">Applizierte Aktivität  [MBq] : 180.0</text><text x="130.9" y="402.7" xml:space="preserve">Clearance Berechnungsmethode : BUBECK</text><text x="130.9" y="412.6" xml:space="preserve">Seitentrennung nach          : OBERHAUSEN</text></g><g font-family="Liberation Sans" font-size="8.3" fill="#2c2c2c" text-anchor="middle"><text x="393.8" y="383.3">Max</text><text x="393.8" y="393.3">[cps]</text><text x="443.8" y="383.3">Tmax (p.i.)</text><text x="443.8" y="393.3">[min:sec]</text><text x="493.2" y="383.3">T 1/2</text><text x="493.2" y="393.3">[min:sec]</text><text x="543.2" y="383.3">Endwert</text><text x="543.2" y="393.3">[% vom Max]</text></g><g font-family="Liberation Mono" font-size="8.6" text-anchor="end"><text x="401" y="405.6" fill="#dc4646">724</text><text x="456" y="405.6" fill="#dc4646">3:13</text><text x="506.5" y="405.6" fill="#dc4646">7:00</text><text x="554" y="405.6" fill="#dc4646">28.7</text><text x="401" y="415.9" fill="#3cb84a">606</text><text x="456" y="415.9" fill="#3cb84a">3:13</text><text x="506.5" y="415.9" fill="#3cb84a">10:30</text><text x="554" y="415.9" fill="#3cb84a">30.3</text><text x="401" y="426.0" fill="#3a3ad8">106</text><text x="456" y="426.0" fill="#3a3ad8">0:18</text><text x="506.5" y="426.0" fill="#3a3ad8">15:25</text><text x="554" y="426.0" fill="#3a3ad8">42.5</text></g></svg><svg width="800" height="640" viewBox="0 0 800 640"><g stroke="#141414" stroke-width="0.85" fill="none"><path d="M130.9 452.9 V578.2 H318.1"/><path d="M128.9 578.20 H130.9"/><path d="M128.9 553.24 H130.9"/><path d="M128.9 528.28 H130.9"/><path d="M128.9 503.32 H130.9"/><path d="M128.9 478.36 H130.9"/><path d="M128.9 453.40 H130.9"/><path d="M129.70000000000002 571.96 H130.9" stroke-width="0.6"/><path d="M129.70000000000002 565.72 H130.9" stroke-width="0.6"/><path d="M129.70000000000002 559.48 H130.9" stroke-width="0.6"/><path d="M129.70000000000002 547.00 H130.9" stroke-width="0.6"/><path d="M129.70000000000002 540.76 H130.9" stroke-width="0.6"/><path d="M129.70000000000002 534.52 H130.9" stroke-width="0.6"/><path d="M129.70000000000002 522.04 H130.9" stroke-width="0.6"/><path d="M129.70000000000002 515.80 H130.9" stroke-width="0.6"/><path d="M129.70000000000002 509.56 H130.9" stroke-width="0.6"/><path d="M129.70000000000002 497.08 H130.9" stroke-width="0.6"/><path d="M129.70000000000002 490.84 H130.9" stroke-width="0.6"/><path d="M129.70000000000002 484.60 H130.9" stroke-width="0.6"/><path d="M129.70000000000002 472.12 H130.9" stroke-width="0.6"/><path d="M129.70000000000002 465.88 H130.9" stroke-width="0.6"/><path d="M129.70000000000002 459.64 H130.9" stroke-width="0.6"/><path d="M130.90 578.2 V580.4000000000001"/><path d="M177.60 578.2 V580.4000000000001"/><path d="M224.30 578.2 V580.4000000000001"/><path d="M271.00 578.2 V580.4000000000001"/><path d="M317.70 578.2 V580.4000000000001"/><path d="M130.90 578.2 V579.5" stroke-width="0.6"/><path d="M138.68 578.2 V579.5" stroke-width="0.6"/><path d="M146.47 578.2 V579.5" stroke-width="0.6"/><path d="M154.25 578.2 V579.5" stroke-width="0.6"/><path d="M162.03 578.2 V579.5" stroke-width="0.6"/><path d="M169.82 578.2 V579.5" stroke-width="0.6"/><path d="M177.60 578.2 V579.5" stroke-width="0.6"/><path d="M185.38 578.2 V579.5" stroke-width="0.6"/><path d="M193.17 578.2 V579.5" stroke-width="0.6"/><path d="M200.95 578.2 V579.5" stroke-width="0.6"/><path d="M208.73 578.2 V579.5" stroke-width="0.6"/><path d="M216.52 578.2 V579.5" stroke-width="0.6"/><path d="M224.30 578.2 V579.5" stroke-width="0.6"/><path d="M232.08 578.2 V579.5" stroke-width="0.6"/><path d="M239.87 578.2 V579.5" stroke-width="0.6"/><path d="M247.65 578.2 V579.5" stroke-width="0.6"/><path d="M255.43 578.2 V579.5" stroke-width="0.6"/><path d="M263.22 578.2 V579.5" stroke-width="0.6"/><path d="M271.00 578.2 V579.5" stroke-width="0.6"/><path d="M278.78 578.2 V579.5" stroke-width="0.6"/><path d="M286.57 578.2 V579.5" stroke-width="0.6"/><path d="M294.35 578.2 V579.5" stroke-width="0.6"/><path d="M302.13 578.2 V579.5" stroke-width="0.6"/><path d="M309.92 578.2 V579.5" stroke-width="0.6"/></g><g font-family="Liberation Mono" font-size="7.7" fill="#141414"><text x="126.7" y="580.90" text-anchor="end">0</text><text x="126.7" y="555.94" text-anchor="end">20</text><text x="126.7" y="530.98" text-anchor="end">40</text><text x="126.7" y="506.02" text-anchor="end">60</text><text x="126.7" y="481.06" text-anchor="end">80</text><text x="126.7" y="456.10" text-anchor="end">100</text><text x="130.90" y="590.5" text-anchor="middle">0</text><text x="177.60" y="590.5" text-anchor="middle">1</text><text x="224.30" y="590.5" text-anchor="middle">2</text><text x="271.00" y="590.5" text-anchor="middle">3</text><text x="317.70" y="590.5" text-anchor="middle">4</text></g><g font-family="Liberation Mono" font-size="8.3" fill="#141414"><text x="123.30000000000001" y="447.6">[%]</text><text x="324.20000000000005" y="579.8">[min]</text></g><g stroke="#141414" stroke-width="0.85" fill="none"><path d="M380.9 452.9 V578.2 H568.0999999999999"/><path d="M378.9 578.20 H380.9"/><path d="M378.9 553.24 H380.9"/><path d="M378.9 528.28 H380.9"/><path d="M378.9 503.32 H380.9"/><path d="M378.9 478.36 H380.9"/><path d="M378.9 453.40 H380.9"/><path d="M379.7 571.96 H380.9" stroke-width="0.6"/><path d="M379.7 565.72 H380.9" stroke-width="0.6"/><path d="M379.7 559.48 H380.9" stroke-width="0.6"/><path d="M379.7 547.00 H380.9" stroke-width="0.6"/><path d="M379.7 540.76 H380.9" stroke-width="0.6"/><path d="M379.7 534.52 H380.9" stroke-width="0.6"/><path d="M379.7 522.04 H380.9" stroke-width="0.6"/><path d="M379.7 515.80 H380.9" stroke-width="0.6"/><path d="M379.7 509.56 H380.9" stroke-width="0.6"/><path d="M379.7 497.08 H380.9" stroke-width="0.6"/><path d="M379.7 490.84 H380.9" stroke-width="0.6"/><path d="M379.7 484.60 H380.9" stroke-width="0.6"/><path d="M379.7 472.12 H380.9" stroke-width="0.6"/><path d="M379.7 465.88 H380.9" stroke-width="0.6"/><path d="M379.7 459.64 H380.9" stroke-width="0.6"/><path d="M380.90 578.2 V580.4000000000001"/><path d="M427.60 578.2 V580.4000000000001"/><path d="M474.30 578.2 V580.4000000000001"/><path d="M521.00 578.2 V580.4000000000001"/><path d="M567.70 578.2 V580.4000000000001"/><path d="M380.90 578.2 V579.5" stroke-width="0.6"/><path d="M390.24 578.2 V579.5" stroke-width="0.6"/><path d="M399.58 578.2 V579.5" stroke-width="0.6"/><path d="M408.92 578.2 V579.5" stroke-width="0.6"/><path d="M418.26 578.2 V579.5" stroke-width="0.6"/><path d="M427.60 578.2 V579.5" stroke-width="0.6"/><path d="M436.94 578.2 V579.5" stroke-width="0.6"/><path d="M446.28 578.2 V579.5" stroke-width="0.6"/><path d="M455.62 578.2 V579.5" stroke-width="0.6"/><path d="M464.96 578.2 V579.5" stroke-width="0.6"/><path d="M474.30 578.2 V579.5" stroke-width="0.6"/><path d="M483.64 578.2 V579.5" stroke-width="0.6"/><path d="M492.98 578.2 V579.5" stroke-width="0.6"/><path d="M502.32 578.2 V579.5" stroke-width="0.6"/><path d="M511.66 578.2 V579.5" stroke-width="0.6"/><path d="M521.00 578.2 V579.5" stroke-width="0.6"/><path d="M530.34 578.2 V579.5" stroke-width="0.6"/><path d="M539.68 578.2 V579.5" stroke-width="0.6"/><path d="M549.02 578.2 V579.5" stroke-width="0.6"/><path d="M558.36 578.2 V579.5" stroke-width="0.6"/></g><g font-family="Liberation Mono" font-size="7.7" fill="#141414"><text x="376.7" y="580.90" text-anchor="end">0</text><text x="376.7" y="555.94" text-anchor="end">20</text><text x="376.7" y="530.98" text-anchor="end">40</text><text x="376.7" y="506.02" text-anchor="end">60</text><text x="376.7" y="481.06" text-anchor="end">80</text><text x="376.7" y="456.10" text-anchor="end">100</text><text x="380.90" y="590.5" text-anchor="middle">0</text><text x="427.60" y="590.5" text-anchor="middle">5</text><text x="474.30" y="590.5" text-anchor="middle">10</text><text x="521.00" y="590.5" text-anchor="middle">15</text><text x="567.70" y="590.5" text-anchor="middle">20</text></g><g font-family="Liberation Mono" font-size="8.3" fill="#141414"><text x="373.29999999999995" y="447.6">[%]</text><text x="574.2" y="579.8">[min]</text></g><g font-family="Liberation Mono" font-size="8.3" fill="#141414" text-anchor="middle"><text x="224.3" y="451.6">Perfusion</text><text x="474.3" y="451.6">Clearance</text></g><g fill="none" stroke-width="0.85" stroke-linejoin="round"><path d="M139.00 577.88 C139.78 577.36 142.31 576.45 143.88 574.62 C145.44 572.80 147.45 569.36 148.75 566.50 C150.05 563.64 150.96 559.87 152.00 556.75 C153.04 553.63 154.21 549.86 155.25 547.00 C156.29 544.14 157.46 540.96 158.50 538.88 C159.54 536.79 160.19 536.08 161.75 534.00 C163.31 531.92 165.65 528.37 168.25 525.88 C170.85 523.38 174.88 520.48 178.00 518.40 C181.12 516.32 185.15 514.17 187.75 512.88 C190.35 511.57 192.17 511.47 194.25 510.27 C196.33 509.08 198.15 507.06 200.75 505.40 C203.35 503.74 207.38 501.54 210.50 499.88 C213.62 498.21 217.13 496.72 220.25 495.00 C223.37 493.28 226.88 490.81 230.00 489.15 C233.12 487.49 236.63 486.00 239.75 484.60 C242.87 483.20 246.38 481.68 249.50 480.38 C252.62 479.07 256.13 477.31 259.25 476.48 C262.37 475.64 265.36 475.59 269.00 475.18 C272.64 474.76 278.36 474.13 282.00 473.88 C285.64 473.62 288.63 473.45 291.75 473.55 C294.87 473.65 298.38 474.21 301.50 474.52 C304.62 474.84 308.65 475.19 311.25 475.50 C313.85 475.81 316.71 476.32 317.75 476.48" stroke="#40bc50"/><path d="M137.38 577.88 C138.16 577.62 140.95 577.55 142.25 576.25 C143.55 574.95 144.46 572.35 145.50 569.75 C146.54 567.15 147.71 563.64 148.75 560.00 C149.79 556.36 150.96 551.16 152.00 547.00 C153.04 542.84 154.21 537.64 155.25 534.00 C156.29 530.36 156.94 527.37 158.50 524.25 C160.06 521.13 162.40 517.10 165.00 514.50 C167.60 511.90 171.63 509.98 174.75 508.00 C177.87 506.02 181.38 503.71 184.50 502.15 C187.62 500.59 191.65 499.91 194.25 498.25 C196.85 496.59 198.15 493.83 200.75 491.75 C203.35 489.67 207.38 487.33 210.50 485.25 C213.62 483.17 217.13 480.57 220.25 478.75 C223.37 476.93 226.88 475.18 230.00 473.88 C233.12 472.57 237.15 471.51 239.75 470.62 C242.35 469.74 243.91 469.65 246.25 468.35 C248.59 467.05 251.78 464.22 254.38 462.50 C256.98 460.78 259.64 458.77 262.50 457.62 C265.36 456.48 269.13 455.87 272.25 455.35 C275.37 454.83 278.36 454.63 282.00 454.38 C285.64 454.12 290.84 453.78 295.00 453.73 C299.16 453.67 304.36 453.79 308.00 454.05 C311.64 454.31 316.19 455.14 317.75 455.35" stroke="#e04848"/><path d="M130.88 576.25 C131.66 574.69 134.45 569.10 135.75 566.50 C137.05 563.90 137.96 564.16 139.00 560.00 C140.04 555.84 141.21 547.78 142.25 540.50 C143.29 533.22 144.46 523.34 145.50 514.50 C146.54 505.66 147.71 493.05 148.75 485.25 C149.79 477.45 150.96 470.43 152.00 465.75 C153.04 461.07 154.31 457.98 155.25 456.00 C156.19 454.02 156.81 453.14 157.85 453.40 C158.89 453.66 160.35 455.91 161.75 457.62 C163.15 459.34 164.81 462.31 166.62 464.12 C168.44 465.94 170.26 467.44 173.12 469.00 C175.99 470.56 181.12 471.80 184.50 473.88 C187.88 475.95 191.65 480.18 194.25 482.00 C196.85 483.82 198.67 485.09 200.75 485.25 C202.83 485.41 205.17 483.75 207.25 482.98 C209.33 482.20 211.41 480.79 213.75 480.38 C216.09 479.96 219.28 480.63 221.88 480.38 C224.47 480.12 227.66 478.59 230.00 478.75 C232.34 478.91 234.42 480.21 236.50 481.35 C238.58 482.49 240.92 484.91 243.00 485.90 C245.08 486.89 246.90 487.63 249.50 487.52 C252.10 487.42 256.65 485.09 259.25 485.25 C261.85 485.41 263.67 487.67 265.75 488.50 C267.83 489.33 269.65 490.09 272.25 490.45 C274.85 490.81 278.36 490.57 282.00 490.77 C285.64 490.98 290.84 491.59 295.00 491.75 C299.16 491.91 304.36 491.65 308.00 491.75 C311.64 491.85 316.19 492.30 317.75 492.40" stroke="#3838dc"/><path d="M383.48 574.62 C383.68 571.25 384.31 560.00 384.77 553.50 C385.24 547.00 385.72 539.20 386.40 534.00 C387.08 528.80 387.80 525.42 389.00 521.00 C390.20 516.58 392.31 511.06 393.88 506.38 C395.44 501.69 397.35 495.91 398.75 491.75 C400.15 487.59 401.35 483.08 402.65 480.38 C403.95 477.67 405.42 475.94 406.88 474.85 C408.33 473.76 410.19 473.45 411.75 473.55 C413.31 473.65 415.06 474.41 416.62 475.50 C418.19 476.59 419.68 478.30 421.50 480.38 C423.32 482.45 425.66 485.38 428.00 488.50 C430.34 491.62 433.52 496.75 436.12 499.88 C438.73 503.00 441.91 505.92 444.25 508.00 C446.59 510.08 448.15 511.31 450.75 512.88 C453.35 514.43 457.64 516.19 460.50 517.75 C463.36 519.31 466.29 521.48 468.62 522.62 C470.96 523.77 473.31 524.48 475.12 524.90 C476.94 525.32 478.18 525.49 480.00 525.23 C481.82 524.97 484.42 523.85 486.50 523.27 C488.58 522.70 490.92 521.96 493.00 521.65 C495.08 521.34 497.42 521.12 499.50 521.33 C501.58 521.53 503.92 522.12 506.00 522.95 C508.08 523.78 510.42 525.02 512.50 526.52 C514.58 528.03 516.66 530.40 519.00 532.38 C521.34 534.35 524.52 537.16 527.12 538.88 C529.73 540.59 532.39 542.06 535.25 543.10 C538.11 544.14 541.88 544.86 545.00 545.38 C548.12 545.89 551.89 546.19 554.75 546.35 C557.61 546.51 561.58 546.35 562.88 546.35" stroke="#40bc50"/><path d="M382.50 573.00 C382.76 570.92 383.61 566.24 384.12 560.00 C384.64 553.76 385.23 540.76 385.75 534.00 C386.27 527.24 386.60 522.43 387.38 517.75 C388.15 513.07 389.32 508.65 390.62 504.75 C391.93 500.85 393.94 497.54 395.50 493.38 C397.06 489.21 399.07 483.17 400.38 478.75 C401.68 474.33 402.58 469.13 403.62 465.75 C404.67 462.37 405.57 459.50 406.88 457.62 C408.18 455.75 410.19 454.67 411.75 454.05 C413.31 453.43 415.32 453.15 416.62 453.73 C417.93 454.30 418.57 455.70 419.88 457.62 C421.18 459.55 422.93 462.63 424.75 465.75 C426.57 468.87 429.17 473.49 431.25 477.12 C433.33 480.76 435.67 485.64 437.75 488.50 C439.83 491.36 442.17 492.82 444.25 495.00 C446.33 497.18 448.15 500.07 450.75 502.15 C453.35 504.23 457.64 506.13 460.50 508.00 C463.36 509.87 466.29 512.55 468.62 513.85 C470.96 515.15 473.31 515.76 475.12 516.12 C476.94 516.49 478.18 516.49 480.00 516.12 C481.82 515.76 484.42 514.63 486.50 513.85 C488.58 513.07 490.92 511.82 493.00 511.25 C495.08 510.68 497.42 510.27 499.50 510.27 C501.58 510.27 503.92 510.47 506.00 511.25 C508.08 512.03 510.42 513.33 512.50 515.15 C514.58 516.97 516.92 520.13 519.00 522.62 C521.08 525.12 523.42 528.67 525.50 530.75 C527.58 532.83 529.92 534.22 532.00 535.62 C534.08 537.03 535.90 538.64 538.50 539.52 C541.10 540.41 545.13 540.73 548.25 541.15 C551.37 541.57 555.66 541.92 558.00 542.12 C560.34 542.33 562.10 542.40 562.88 542.45" stroke="#e04848"/><path d="M380.88 573.00 C381.13 569.88 382.08 563.38 382.50 553.50 C382.92 543.62 383.16 524.77 383.48 511.25 C383.79 497.73 384.09 478.10 384.45 469.00 C384.81 459.90 385.28 455.94 385.75 454.38 C386.22 452.81 386.86 456.91 387.38 459.25 C387.89 461.59 388.32 466.40 389.00 469.00 C389.68 471.60 390.72 472.90 391.60 475.50 C392.48 478.10 393.64 484.31 394.52 485.25 C395.41 486.19 396.35 482.39 397.12 481.35 C397.90 480.31 398.62 478.39 399.40 478.75 C400.18 479.11 401.22 482.17 402.00 483.62 C402.78 485.08 403.65 487.49 404.27 487.85 C404.90 488.21 405.22 485.54 405.90 485.90 C406.58 486.26 407.30 489.29 408.50 490.12 C409.70 490.96 411.81 490.84 413.38 491.10 C414.94 491.36 416.43 490.97 418.25 491.75 C420.07 492.53 422.15 494.68 424.75 495.98 C427.35 497.28 431.38 498.57 434.50 499.88 C437.62 501.18 441.13 502.90 444.25 504.10 C447.37 505.30 450.88 506.47 454.00 507.35 C457.12 508.23 461.15 508.90 463.75 509.62 C466.35 510.35 468.43 511.90 470.25 511.90 C472.07 511.90 473.56 510.51 475.12 509.62 C476.69 508.74 478.44 507.26 480.00 506.38 C481.56 505.49 483.31 504.46 484.88 504.10 C486.44 503.74 487.93 503.68 489.75 504.10 C491.57 504.52 493.65 505.87 496.25 506.70 C498.85 507.53 502.88 508.31 506.00 509.30 C509.12 510.29 512.63 511.89 515.75 512.88 C518.87 513.86 522.38 514.44 525.50 515.48 C528.62 516.51 532.13 518.23 535.25 519.38 C538.37 520.52 541.88 521.74 545.00 522.62 C548.12 523.51 552.25 524.43 554.75 524.90 C557.25 525.37 559.30 525.65 560.60 525.55 C561.90 525.45 562.51 524.46 562.88 524.25" stroke="#3838dc"/></g><path d="M143.9 540.5 V594" stroke="#e04848" stroke-width="0.8"/><rect x="133.4" y="593.8" width="21.4" height="7.4" fill="#fff"/><text x="144.1" y="600" font-family="Liberation Mono" font-size="6.6" fill="#d83030" text-anchor="middle">START</text><g font-family="Liberation Mono" font-size="8.15"><text x="256" y="513.2" fill="#e04848">Niere links</text><text x="256" y="524.9" fill="#40bc50">Niere rechts</text><text x="265.7" y="536.8" fill="#3838dc">Retention</text></g></svg>
<div style="left:633.6px;top:47.5px;width:1.2px;height:562px;background:#efeee6;"></div>
<div style="left:639px;top:25px;width:154px;height:17px;background:#f1f0ec;"></div>
<div class="b" style="left:642px;top:28.6px;font-size:8.7px;line-height:10px;color:#1a1a1a;">BUBECK  MAG3</div>
<div class="tb" style="left:639.5px;top:48px;"></div><div class="tb" style="left:679.5px;top:48px;"></div><div class="tb" style="left:719.5px;top:48px;"></div><div class="tb" style="left:759.5px;top:48px;"></div>
<div class="tb" style="left:639.5px;top:80.5px;"></div><div class="tb" style="left:679.5px;top:80.5px;"></div><div class="tb" style="left:719.5px;top:80.5px;"></div><div class="tb" style="left:759.5px;top:80.5px;"></div>
<svg width="800" height="640" viewBox="0 0 800 640">
<!-- folder -->
<path d="M650.5 57.2 L654.2 53.6 L657 54.4 L660.6 57.6 L660.6 60 L650.5 60Z" fill="#e8e8f4" stroke="#8080a8" stroke-width="0.5"/>
<path d="M654.6 54.6 L657.8 56.4" stroke="#6060c0" stroke-width="0.6"/>
<path d="M660.4 57 L663 58.6 V66 L661 66.4 Z" fill="#8c8c30" stroke="#333" stroke-width="0.5"/>
<path d="M648.4 59.6 L650.2 57.6 H658.4 L661.4 60.4 L661.8 66.4 H649.6 Z" fill="#e6e650" stroke="#3c3c14" stroke-width="0.6" stroke-linejoin="round"/>
<path d="M649.3 60.4 L651 58.6 H657.8" fill="none" stroke="#ffffa8" stroke-width="0.6"/>
<!-- floppy -->
<rect x="688.6" y="53.2" width="12.4" height="12.4" fill="#8a8a1c" stroke="#28280c" stroke-width="0.7"/>
<rect x="689.2" y="53.6" width="11.2" height="1.8" fill="#d02010"/>
<rect x="691" y="55.4" width="7.6" height="5.4" fill="#ffffff"/>
<rect x="690.6" y="62" width="8.2" height="3.4" fill="#0c0c0c"/>
<rect x="691.6" y="62.6" width="2.2" height="2.4" fill="#e8e8e0"/>
<!-- pencil -->
<path d="M729 65.6 L730 61.8 L738.8 53.4 L741.4 55.8 L732.6 64.4 Z" fill="#f0f040" stroke="#4a4a10" stroke-width="0.6" stroke-linejoin="round"/>
<path d="M729 65.6 L730 61.8 L732.6 64.4 Z" fill="#1c1c1c"/>
<path d="M731.2 62.2 L739.4 54.4" stroke="#ffffb0" stroke-width="0.7"/>
<!-- question -->
<text x="0" y="0" transform="translate(775.7 66) scale(0.86 1)" font-family="Liberation Sans" font-weight="bold" font-size="16" text-anchor="middle" fill="#eeee30" stroke="#2c2c08" stroke-width="1.3" paint-order="stroke">?</text>
<!-- colour strip + arrow -->
<rect x="648" y="84.6" width="4.4" height="2.1" fill="#ffffff"/><rect x="648" y="86.6" width="4.4" height="2.1" fill="#e04010"/><rect x="648" y="88.6" width="4.4" height="2.1" fill="#f0e020"/><rect x="648" y="90.6" width="4.4" height="2.1" fill="#30d030"/><rect x="648" y="92.6" width="4.4" height="2.1" fill="#20d0d0"/><rect x="648" y="94.6" width="4.4" height="2.1" fill="#2020e0"/><rect x="648" y="96.6" width="4.4" height="2.1" fill="#c020d0"/>
<path d="M657.6 87.4 V96.4" stroke="#111" stroke-width="1.1"/>
<path d="M655 89 L657.6 85.8 L660.2 89 Z M655 94.6 L657.6 97.8 L660.2 94.6 Z" fill="#111"/>
<g transform="translate(0 0)">
<path d="M686.8 93 L693.5 88.2 L704.6 90.6 L704.6 95.5 L697.3 100.4 L686.8 97.6 Z" fill="#b8b8b8" stroke="#4a4a4a" stroke-width="0.6" stroke-linejoin="round"/>
<path d="M686.8 93 L697.3 95.6 L704.6 90.6 M697.3 95.6 V100.4" fill="none" stroke="#4a4a4a" stroke-width="0.6"/>
<path d="M686.8 93 L693.5 88.2 L704.6 90.6 L697.3 95.6 Z" fill="#d6d6d6"/>
<path d="M692.6 90.4 L696 84.2 L701.4 85.6 L698.6 91.8 Z" fill="#fbfbff" stroke="#7a7aa0" stroke-width="0.5"/>
<path d="M695.6 86.6 L699.6 87.6 M694.8 88.4 L698.8 89.4" stroke="#8a8ac0" stroke-width="0.5"/>
<path d="M688 95 L696.2 97.2" stroke="#666" stroke-width="0.9"/>
<path d="M702 96.6 L705.4 94.4 L704.6 91.4" fill="none" stroke="#3a3a3a" stroke-width="0.6"/>
</g>
<!-- network -->
<path d="M735.6 88.4 V91.6 M729.6 93 V91.6 H741.2 V93 M739.4 86 H741.4 V89.6" fill="none" stroke="#222" stroke-width="0.6"/>
<g transform="translate(735.6 85.8)">
<rect x="-3.2" y="-3.4" width="6.4" height="5.2" fill="#c8c8b8" stroke="#555" stroke-width="0.4"/>
<rect x="-2.3" y="-2.6" width="4.6" height="3.4" fill="#2828c8"/>
<rect x="-1" y="-2" width="1.6" height="1.4" fill="#9090f0"/>
<path d="M-4 2 H4 L4.6 3.8 H-4.6 Z" fill="#d8d8c8" stroke="#666" stroke-width="0.4"/>
<path d="M-4.6 4 H4.6" stroke="#909060" stroke-width="0.7"/>
</g><g transform="translate(729.6 96)">
<rect x="-3.2" y="-3.4" width="6.4" height="5.2" fill="#c8c8b8" stroke="#555" stroke-width="0.4"/>
<rect x="-2.3" y="-2.6" width="4.6" height="3.4" fill="#2828c8"/>
<rect x="-1" y="-2" width="1.6" height="1.4" fill="#9090f0"/>
<path d="M-4 2 H4 L4.6 3.8 H-4.6 Z" fill="#d8d8c8" stroke="#666" stroke-width="0.4"/>
<path d="M-4.6 4 H4.6" stroke="#909060" stroke-width="0.7"/>
</g><g transform="translate(741.2 96)">
<rect x="-3.2" y="-3.4" width="6.4" height="5.2" fill="#c8c8b8" stroke="#555" stroke-width="0.4"/>
<rect x="-2.3" y="-2.6" width="4.6" height="3.4" fill="#2828c8"/>
<rect x="-1" y="-2" width="1.6" height="1.4" fill="#9090f0"/>
<path d="M-4 2 H4 L4.6 3.8 H-4.6 Z" fill="#d8d8c8" stroke="#666" stroke-width="0.4"/>
<path d="M-4.6 4 H4.6" stroke="#909060" stroke-width="0.7"/>
</g>
<g transform="translate(80 0)">
<path d="M686.8 93 L693.5 88.2 L704.6 90.6 L704.6 95.5 L697.3 100.4 L686.8 97.6 Z" fill="#b8b8b8" stroke="#4a4a4a" stroke-width="0.6" stroke-linejoin="round"/>
<path d="M686.8 93 L697.3 95.6 L704.6 90.6 M697.3 95.6 V100.4" fill="none" stroke="#4a4a4a" stroke-width="0.6"/>
<path d="M686.8 93 L693.5 88.2 L704.6 90.6 L697.3 95.6 Z" fill="#d6d6d6"/>
<path d="M692.6 90.4 L696 84.2 L701.4 85.6 L698.6 91.8 Z" fill="#fbfbff" stroke="#7a7aa0" stroke-width="0.5"/>
<path d="M695.6 86.6 L699.6 87.6 M694.8 88.4 L698.8 89.4" stroke="#8a8ac0" stroke-width="0.5"/>
<path d="M688 95 L696.2 97.2" stroke="#666" stroke-width="0.9"/>
<path d="M702 96.6 L705.4 94.4 L704.6 91.4" fill="none" stroke="#3a3a3a" stroke-width="0.6"/>
</g>
<rect x="768" y="97.4" width="14.4" height="4.4" fill="#30e0e0"/>
<text x="775.2" y="101.2" font-family="Liberation Sans" font-weight="bold" font-size="4.2" text-anchor="middle" fill="#104060">SETUP</text>
</svg>
<div style="left:638px;top:112.5px;width:157px;height:497px;border-radius:3px;border:1px solid #b4b2a6;box-shadow:inset 1px 1px 0 #fbfaf4, 1px 1px 0 #fbfaf4;"></div>
<div style="left:642px;top:118px;width:146.8px;height:488px;background:#fff;border-top:1px solid #8a887e;border-left:1px solid #8a887e;border-right:1px solid #dcdad0;border-bottom:1px solid #dcdad0;border-radius:0 0 3px 0;"></div>
<svg width="800" height="640" viewBox="0 0 800 640"><g stroke="#3c3c46" stroke-width="0.85" fill="none">
<path d="M652.2 119 V263.6 H656.5"/>
<path d="M652.2 126.1 H656.5"/>
<path d="M652.2 138.6 H656.5"/>
<path d="M652.2 151.1 H656.5"/>
<path d="M652.2 251.1 H656.5"/>
<path d="M652.2 163.6 H657"/>
<path d="M652.2 213.6 H657"/>
<path d="M652.2 226.1 H657"/>
<path d="M652.2 238.6 H657"/>
<path d="M663.5 168.6 V201.1 H668"/>
<path d="M663.5 176.1 H668"/>
<path d="M663.5 188.6 H668"/>
</g>
<rect x="650" y="161.4" width="4.4" height="4.4" fill="#d4d4d4" stroke="#5a5a62" stroke-width="0.6"/>
<path d="M650.7 163.6 H653.7" stroke="#222" stroke-width="0.7"/>
<rect x="650" y="211.4" width="4.4" height="4.4" fill="#d4d4d4" stroke="#5a5a62" stroke-width="0.6"/>
<path d="M650.7 213.6 H653.7" stroke="#222" stroke-width="0.7"/>
<path d="M652.2 212.1 V215.1" stroke="#222" stroke-width="0.7"/>
<rect x="650" y="223.9" width="4.4" height="4.4" fill="#d4d4d4" stroke="#5a5a62" stroke-width="0.6"/>
<path d="M650.7 226.1 H653.7" stroke="#222" stroke-width="0.7"/>
<path d="M652.2 224.6 V227.6" stroke="#222" stroke-width="0.7"/>
<rect x="650" y="236.4" width="4.4" height="4.4" fill="#d4d4d4" stroke="#5a5a62" stroke-width="0.6"/>
<path d="M650.7 238.6 H653.7" stroke="#222" stroke-width="0.7"/>
<path d="M652.2 237.1 V240.1" stroke="#222" stroke-width="0.7"/>
<rect x="668.3" y="171.5" width="8.6" height="9" rx="1.3" fill="#bcbcb8" stroke="#90908c" stroke-width="0.5"/>
<text x="672.6" y="178.4" font-family="Liberation Sans" font-weight="bold" font-size="6.2" fill="#3a3a3a" text-anchor="middle">F2</text>
<rect x="668.3" y="184.0" width="8.6" height="9" rx="1.3" fill="#bcbcb8" stroke="#90908c" stroke-width="0.5"/>
<text x="672.6" y="190.9" font-family="Liberation Sans" font-weight="bold" font-size="6.2" fill="#3a3a3a" text-anchor="middle">F3</text>
<rect x="668.3" y="196.5" width="8.6" height="9" rx="1.3" fill="#bcbcb8" stroke="#90908c" stroke-width="0.5"/>
<text x="672.6" y="203.4" font-family="Liberation Sans" font-weight="bold" font-size="6.2" fill="#3a3a3a" text-anchor="middle">F4</text>
</svg>
<div class="ti" style="left:660px;top:119.85px;color:#1c1c64;">Parameter</div>
<div class="ti" style="left:660px;top:132.35px;color:#1c1c64;">Sequenz Darstellung</div>
<div class="ti" style="left:660px;top:144.85px;color:#1c1c64;">Patientendaten</div>
<div class="ti" style="left:660px;top:157.35px;color:#1c1c64;">Clearence</div>
<div class="ti" style="left:679.5px;top:169.85px;color:#1c1c64;">Summenbild</div>
<div class="ti" style="left:679.5px;top:182.35px;color:#d01818;">Roi</div>
<div class="ti" style="left:679.5px;top:194.85px;color:#1c1c64;">Sequenz</div>
<div class="ti" style="left:660px;top:207.35px;color:#1c1c64;">Clearence (1 Niere)</div>
<div class="ti" style="left:660px;top:219.85px;color:#1c1c64;">nur Kurvenverlauf</div>
<div class="ti" style="left:660px;top:232.35px;color:#1c1c64;">Transplantierte Niere</div>
<div class="ti" style="left:660px;top:244.85px;color:#1c1c64;">Untersuchungsdaten</div>
<div class="ti" style="left:660px;top:257.35px;color:#1c1c64;">Zwischenergebnisse</div>

<div style="left:0;top:620px;width:800px;height:20px;background:linear-gradient(#5a9ef8 0%,#3485f4 10%,#2b7aef 40%,#2570e8 75%,#1d5ed2 100%);"></div>
<div class="b" style="left:11px;top:625.6px;font-size:8.8px;line-height:11px;color:#fff;">Start</div>
<div style="left:40px;top:622px;width:1px;height:17px;background:#1a50b8;"></div>
<div style="left:138.5px;top:622px;width:1px;height:17px;background:#1a50b8;"></div>
<div style="left:233.5px;top:623px;width:90px;height:15px;background:#1e58cc;border-radius:1.5px;box-shadow:inset 0.5px 0.5px 0 #1846a8;"></div>
<div style="left:152px;top:626.5px;font-size:6.4px;line-height:9px;color:#fff;">SAM</div>
<div style="left:246px;top:626.5px;font-size:6.53px;line-height:9px;color:#fff;">Bildschirm kopieren</div>
<div style="left:779.5px;top:627.3px;font-size:6.3px;line-height:9px;color:#fff;">18:08</div>
<svg width="800" height="640" viewBox="0 0 800 640">
<path d="M48.4 636 L53.4 626.8 L58.4 636 Z" fill="#1818b8"/>
<path d="M51 633 L53.4 628.6 L55.8 633 Z" fill="#2a2ad8"/>
<!-- SAM icon -->
<path d="M145 627.6 H151.2 L150.2 632.6 H146 Z" fill="#f4f4ff"/>
<rect x="146.2" y="632.6" width="3.8" height="2.6" fill="#10103c"/>
<path d="M142.8 626.6 H145" stroke="#d8d8d8" stroke-width="0.8"/>
<!-- Bildschirm icon -->
<rect x="236.4" y="626.6" width="8.6" height="7.4" fill="#a8a890" stroke="#50503c" stroke-width="0.5"/>
<rect x="237.6" y="628.2" width="3.4" height="3" fill="#3a9a3a"/>
<rect x="241.4" y="628" width="2.8" height="4.2" fill="#e8e0c8"/>
<rect x="237.4" y="626.6" width="6" height="1.2" fill="#c03838"/>
<!-- flag -->
<rect x="760.8" y="628.8" width="9.6" height="2.3" fill="#1a1a1a"/>
<rect x="760.8" y="631.0" width="9.6" height="2.2" fill="#d82020"/>
<rect x="760.8" y="633.2" width="9.6" height="2.3" fill="#f0c820"/>
</svg>
</body></html>
